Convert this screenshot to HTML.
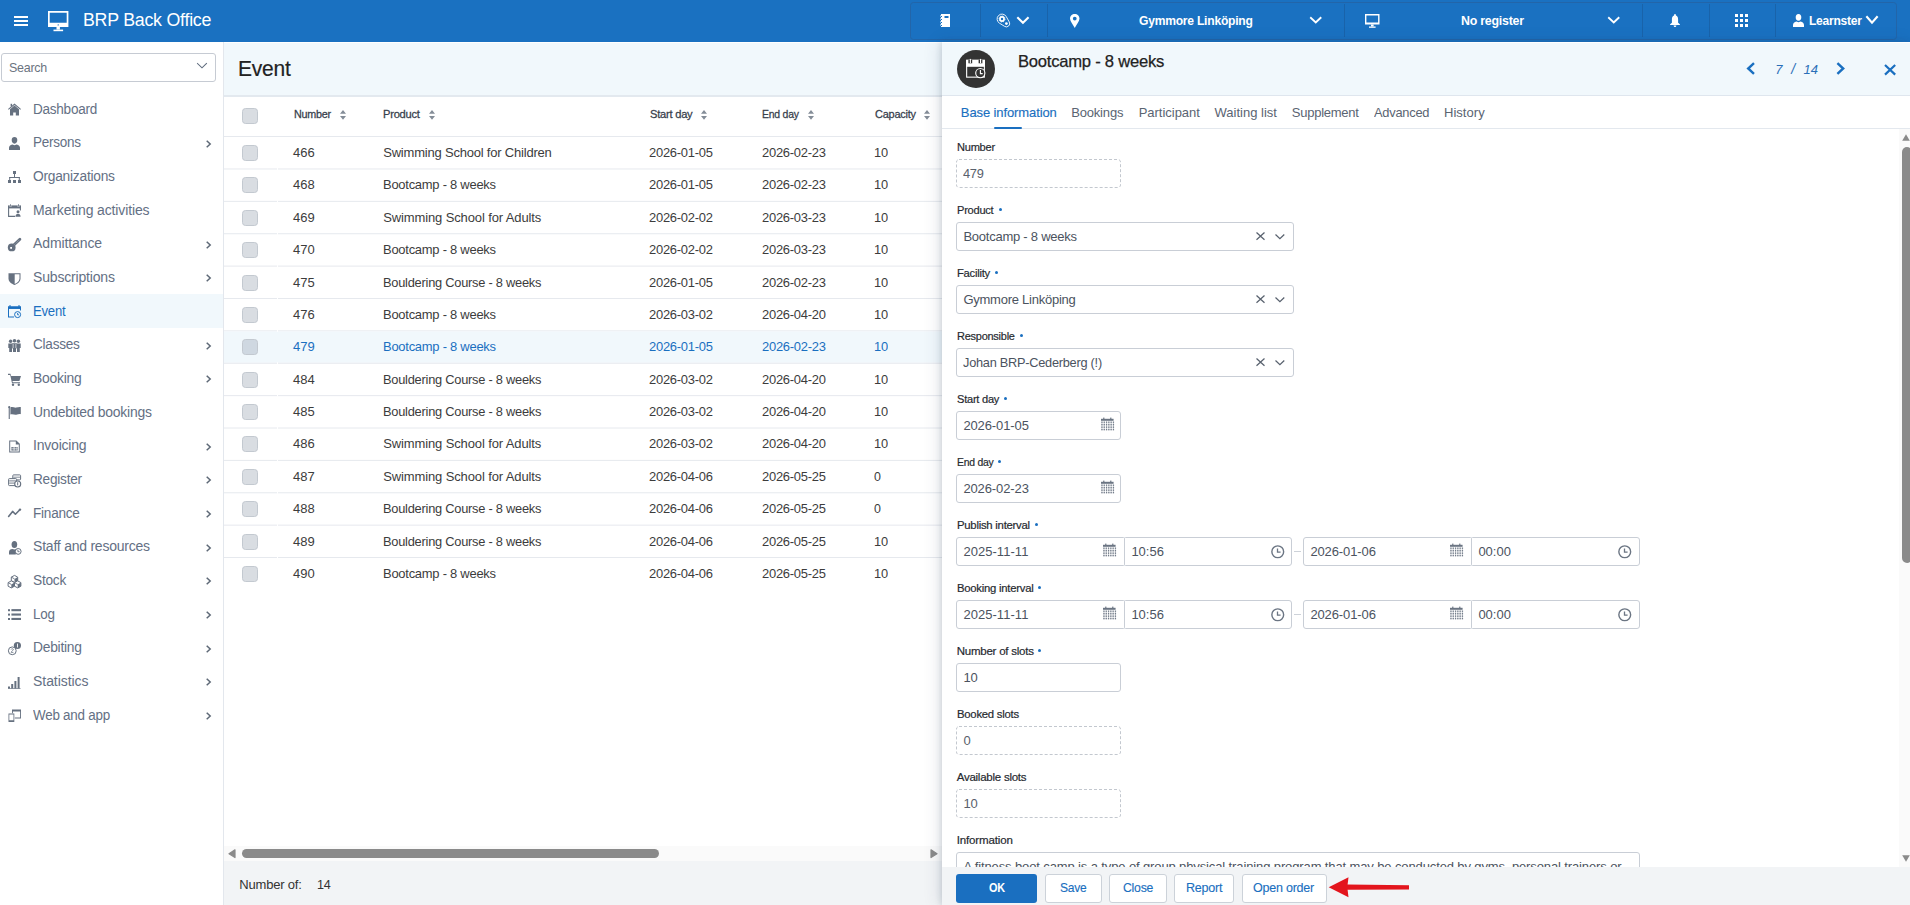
<!DOCTYPE html><html><head><meta charset="utf-8"><title>BRP Back Office</title><style>
html,body{margin:0;padding:0;}
body{width:1910px;height:905px;overflow:hidden;position:relative;background:#fff;font-family:"Liberation Sans",sans-serif;}
.t{position:absolute;white-space:nowrap;}
.b{position:absolute;box-sizing:border-box;}
svg.b{overflow:visible;}
</style></head><body>
<div class="b" style="left:0.00px;top:0.00px;width:1910.00px;height:42.00px;background:#1a71c1;"></div>
<div class="b" style="left:14.00px;top:15.90px;width:14.00px;height:1.80px;background:#fff;"></div>
<div class="b" style="left:14.00px;top:20.15px;width:14.00px;height:1.80px;background:#fff;"></div>
<div class="b" style="left:14.00px;top:24.40px;width:14.00px;height:1.80px;background:#fff;"></div>
<svg class="b" style="left:47.70px;top:10.90px;" width="21" height="21" viewBox="0 0 21 21"><path d="M0 0H20.4V16.1H0Z M1.7 1.8V11.8H18.7V1.8Z" fill="#fff" fill-rule="evenodd"/><circle cx="10.2" cy="13.9" r="0.7" fill="#1a71c1"/><rect x="8.5" y="16" width="3.4" height="2.6" fill="#fff"/><rect x="5.5" y="18.6" width="9.6" height="1.6" fill="#fff"/></svg>
<div class="t" style="left:82.60px;top:10.76px;font-size:18px;line-height:18px;color:#fff;font-weight:normal;letter-spacing:-0.250px;font-style:normal;transform:scaleX(0.9883);transform-origin:0 0;">BRP Back Office</div>
<div class="b" style="left:910.00px;top:2.00px;width:987.00px;height:38.00px;border:1px solid #2265a9;border-radius:3.5px;"></div>
<div class="b" style="left:980.00px;top:4.00px;width:1.00px;height:33.00px;background:#1963aa;"></div>
<div class="b" style="left:1047.00px;top:4.00px;width:1.00px;height:33.00px;background:#1963aa;"></div>
<div class="b" style="left:1344.00px;top:4.00px;width:1.00px;height:33.00px;background:#1963aa;"></div>
<div class="b" style="left:1642.00px;top:4.00px;width:1.00px;height:33.00px;background:#1963aa;"></div>
<div class="b" style="left:1709.00px;top:4.00px;width:1.00px;height:33.00px;background:#1963aa;"></div>
<div class="b" style="left:1775.00px;top:4.00px;width:1.00px;height:33.00px;background:#1963aa;"></div>
<svg class="b" style="left:940.00px;top:14.00px;" width="10" height="13" viewBox="0 0 10 13"><path d="M1 0H10V13H1Z" fill="#fff"/><rect x="4.5" y="2" width="4" height="2" fill="#1a71c1"/><g fill="#1a71c1"><rect x="1" y="2" width="1" height="1"/><rect x="1" y="5" width="1" height="1"/><rect x="1" y="8" width="1" height="1"/><rect x="1" y="11" width="1" height="1"/></g><g fill="#fff"><rect x="0" y="1.5" width="1" height="1"/><rect x="0" y="4.5" width="1" height="1"/><rect x="0" y="7.5" width="1" height="1"/><rect x="0" y="10.5" width="1" height="1"/></g></svg>
<svg class="b" style="left:992.00px;top:10.00px;" width="22" height="22" viewBox="0 0 22 22"><path d="M14.28 6.61 A4.9 4.9 0 1 0 7.42 13.16 L12.66 16.4 A3.3 3.3 0 0 0 17.28 11.99 Z" fill="none" stroke="#fff" stroke-width="0.9"/><circle cx="10" cy="9" r="2.05" fill="none" stroke="#fff" stroke-width="1.7"/><circle cx="10" cy="9" r="3.05" fill="none" stroke="#fff" stroke-width="0.8" stroke-dasharray="1.2 1.2"/><circle cx="14.4" cy="13.6" r="1.4" fill="#fff"/></svg>
<svg class="b" style="left:1017.20px;top:16.70px;" width="11.9" height="7.2" viewBox="0 0 11.9 7.2"><path d="M1.05 1.05 L5.95 5.8500000000000005 L10.85 1.05" fill="none" stroke="#fff" stroke-width="2.1" stroke-linecap="square"/></svg>
<svg class="b" style="left:1070.00px;top:14.00px;" width="9.5" height="14" viewBox="0 0 9.5 14"><path d="M4.75 0 C7.4 0 9.5 2 9.5 4.6 C9.5 7.4 6.4 10.6 4.75 14 C3.1 10.6 0 7.4 0 4.6 C0 2 2.1 0 4.75 0Z M4.75 2.7 A1.9 1.9 0 1 0 4.75 6.5 A1.9 1.9 0 1 0 4.75 2.7Z" fill="#fff" fill-rule="evenodd"/></svg>
<div class="t" style="left:1138.50px;top:14.10px;font-size:13px;line-height:13px;color:#fff;font-weight:bold;letter-spacing:-0.250px;font-style:normal;transform:scaleX(0.9302);transform-origin:0 0;">Gymmore Linköping</div>
<svg class="b" style="left:1310.00px;top:17.00px;" width="11.5" height="6.8" viewBox="0 0 11.5 6.8"><path d="M0.95 0.95 L5.75 5.55 L10.55 0.95" fill="none" stroke="#fff" stroke-width="1.9" stroke-linecap="square"/></svg>
<svg class="b" style="left:1365.00px;top:14.00px;" width="15" height="14" viewBox="0 0 15 14"><path d="M0 0H14.5V10.5H0Z M1.4 1.4V8.4H13.1V1.4Z" fill="#fff" fill-rule="evenodd"/><rect x="6" y="10.5" width="2.6" height="2" fill="#fff"/><rect x="4" y="12.5" width="6.6" height="1.3" fill="#fff"/></svg>
<div class="t" style="left:1461.00px;top:14.10px;font-size:13px;line-height:13px;color:#fff;font-weight:bold;letter-spacing:-0.250px;font-style:normal;transform:scaleX(0.9523);transform-origin:0 0;">No register</div>
<svg class="b" style="left:1608.00px;top:17.00px;" width="11.5" height="6.8" viewBox="0 0 11.5 6.8"><path d="M0.95 0.95 L5.75 5.55 L10.55 0.95" fill="none" stroke="#fff" stroke-width="1.9" stroke-linecap="square"/></svg>
<svg class="b" style="left:1670.30px;top:13.80px;" width="10" height="13.2" viewBox="0 0 10 13.2"><path d="M5 0 C5.6 0 5.9 0.4 5.9 1 V1.6 C7.6 2.2 8.1 3.6 8.1 5.6 V8.8 L9.9 10.3 V11 H0.1 V10.3 L1.9 8.8 V5.6 C1.9 3.6 2.4 2.2 4.1 1.6 V1 C4.1 0.4 4.4 0 5 0Z M3.6 11.6 H6.4 C6.4 12.5 5.8 13.1 5 13.1 C4.2 13.1 3.6 12.5 3.6 11.6Z" fill="#fff"/></svg>
<svg class="b" style="left:1735.00px;top:14.00px;" width="13" height="13" viewBox="0 0 13 13"><rect x="0" y="0" width="3" height="3" fill="#fff"/><rect x="5" y="0" width="3" height="3" fill="#fff"/><rect x="10" y="0" width="3" height="3" fill="#fff"/><rect x="0" y="5" width="3" height="3" fill="#fff"/><rect x="5" y="5" width="3" height="3" fill="#fff"/><rect x="10" y="5" width="3" height="3" fill="#fff"/><rect x="0" y="10" width="3" height="3" fill="#fff"/><rect x="5" y="10" width="3" height="3" fill="#fff"/><rect x="10" y="10" width="3" height="3" fill="#fff"/></svg>
<svg class="b" style="left:1793.00px;top:14.00px;" width="11" height="13" viewBox="0 0 11 13"><path d="M5.5 0 C7.4 0 8.3 1.4 8.3 3.2 C8.3 5.2 7.4 6.8 5.5 6.8 C3.6 6.8 2.7 5.2 2.7 3.2 C2.7 1.4 3.6 0 5.5 0Z M3.4 7.6 L5.5 8.3 L7.6 7.6 C9.6 8 11 9.2 11 11 V13 H0 V11 C0 9.2 1.4 8 3.4 7.6Z" fill="#fff"/></svg>
<div class="t" style="left:1809.00px;top:14.10px;font-size:13px;line-height:13px;color:#fff;font-weight:bold;letter-spacing:-0.250px;font-style:normal;transform:scaleX(0.9248);transform-origin:0 0;">Learnster</div>
<svg class="b" style="left:1866.00px;top:16.00px;" width="12" height="8" viewBox="0 0 12 8"><path d="M1.05 1.05 L6.0 6.65 L10.95 1.05" fill="none" stroke="#fff" stroke-width="2.1" stroke-linecap="square"/></svg>
<div class="b" style="left:223.00px;top:42.00px;width:1.00px;height:863.00px;background:#e3e7ed;"></div>
<div class="b" style="left:1.00px;top:53.30px;width:215.00px;height:28.60px;border:1px solid #c6cbd3;border-radius:3px;background:#fff;"></div>
<div class="t" style="left:9.40px;top:60.70px;font-size:13px;line-height:13px;color:#6b7480;font-weight:normal;letter-spacing:-0.250px;font-style:normal;transform:scaleX(0.9579);transform-origin:0 0;">Search</div>
<svg class="b" style="left:197.20px;top:63.40px;" width="10" height="5.6" viewBox="0 0 10 5.6"><path d="M0.525 0.525 L5.0 4.7749999999999995 L9.475 0.525" fill="none" stroke="#5d6a7c" stroke-width="1.05" stroke-linecap="square"/></svg>
<svg class="b" style="left:8.00px;top:103.30px;" width="13" height="13" viewBox="0 0 13 13"><path d="M6.5 0.6 L13 6 L12.3 6.8 L6.5 2 L0.7 6.8 L0 6 Z" fill="#667180"/><path d="M2 6.2 L6.5 2.6 L11 6.2 V12.4 H7.8 V9.4 H5.2 V12.4 H2Z" fill="#667180"/><rect x="2.6" y="0.8" width="1.5" height="2.6" fill="#667180"/></svg>
<div class="t" style="left:33.10px;top:101.75px;font-size:14px;line-height:14px;color:#647084;font-weight:normal;letter-spacing:-0.250px;font-style:normal;transform:scaleX(0.9659);transform-origin:0 0;">Dashboard</div>
<svg class="b" style="left:8.00px;top:136.97px;" width="13" height="13" viewBox="0 0 13 13"><path d="M6.5 0 C8.3 0 9.3 1.3 9.3 3.1 C9.3 5.1 8.3 6.7 6.5 6.7 C4.7 6.7 3.7 5.1 3.7 3.1 C3.7 1.3 4.7 0 6.5 0Z M4.3 7.4 L6.5 8.2 L8.7 7.4 C10.8 7.8 12 9 12 10.8 V13 H1 V10.8 C1 9 2.2 7.8 4.3 7.4Z" fill="#667180"/></svg>
<div class="t" style="left:33.10px;top:135.42px;font-size:14px;line-height:14px;color:#647084;font-weight:normal;letter-spacing:-0.250px;font-style:normal;transform:scaleX(0.9638);transform-origin:0 0;">Persons</div>
<svg class="b" style="left:205.60px;top:139.67px;" width="5" height="8" viewBox="0 0 5 8"><path d="M0.7 0.7 L4.2 4 L0.7 7.3" fill="none" stroke="#5d6876" stroke-width="1.5"/></svg>
<svg class="b" style="left:8.00px;top:170.63px;" width="13" height="13" viewBox="0 0 13 13"><rect x="5" y="0" width="3" height="3" fill="#667180"/><rect x="6" y="3" width="1" height="4" fill="#667180"/><rect x="1.2" y="6" width="10.6" height="1" fill="#667180"/><rect x="1.2" y="6" width="1" height="3" fill="#667180"/><rect x="10.8" y="6" width="1" height="3" fill="#667180"/><rect x="0" y="9" width="3" height="3" fill="#667180"/><rect x="5" y="9" width="3" height="3" fill="#667180"/><rect x="10" y="9" width="3" height="3" fill="#667180"/></svg>
<div class="t" style="left:33.10px;top:169.08px;font-size:14px;line-height:14px;color:#647084;font-weight:normal;letter-spacing:-0.250px;font-style:normal;transform:scaleX(0.9831);transform-origin:0 0;">Organizations</div>
<svg class="b" style="left:8.00px;top:204.30px;" width="13" height="13" viewBox="0 0 13 13"><path d="M0.6 2 V12.4 H7" fill="none" stroke="#667180" stroke-width="1.1"/><rect x="0" y="1.4" width="13" height="3" fill="#667180"/><rect x="1.6" y="1.4" width="1.8" height="1.3" fill="#fff"/><rect x="9.6" y="1.4" width="1.8" height="1.3" fill="#fff"/><rect x="2.1" y="0.2" width="0.8" height="2.4" fill="#667180"/><rect x="10.1" y="0.2" width="0.8" height="2.4" fill="#667180"/><path d="M12.4 4 V6.5" stroke="#667180" stroke-width="1.1"/><circle cx="10" cy="7.8" r="1.5" fill="#667180"/><path d="M7.4 12.8 C7.4 10.6 8.6 9.7 10 9.7 C11.4 9.7 12.6 10.6 12.6 12.8Z" fill="#667180"/></svg>
<div class="t" style="left:33.10px;top:202.75px;font-size:14px;line-height:14px;color:#647084;font-weight:normal;letter-spacing:-0.137px;font-style:normal;">Marketing activities</div>
<svg class="b" style="left:8.00px;top:237.97px;" width="13" height="13" viewBox="0 0 13 13"><circle cx="3.7" cy="9.4" r="3.9" fill="#667180"/><rect x="2.2" y="9" width="1.8" height="1.8" fill="#fff"/><path d="M5.6 7.3 L11.9 1.2" stroke="#667180" stroke-width="2.8" stroke-linecap="round"/><path d="M6.6 6.5 L11.4 1.8" stroke="#fff" stroke-width="0.7" stroke-dasharray="0.9 0.9" opacity="0.6"/></svg>
<div class="t" style="left:33.10px;top:236.42px;font-size:14px;line-height:14px;color:#647084;font-weight:normal;letter-spacing:-0.111px;font-style:normal;">Admittance</div>
<svg class="b" style="left:205.60px;top:240.67px;" width="5" height="8" viewBox="0 0 5 8"><path d="M0.7 0.7 L4.2 4 L0.7 7.3" fill="none" stroke="#5d6876" stroke-width="1.5"/></svg>
<svg class="b" style="left:8.00px;top:271.63px;" width="13" height="13" viewBox="0 0 13 13"><path d="M0.5 1.2 H12.5 V6.5 C12.5 9.6 9.8 11.6 6.5 13 C3.2 11.6 0.5 9.6 0.5 6.5Z" fill="#667180"/><path d="M6.7 2.2 H11.5 V6.5 C11.5 9 9.4 10.8 6.7 11.9Z" fill="#fff"/></svg>
<div class="t" style="left:33.10px;top:270.08px;font-size:14px;line-height:14px;color:#647084;font-weight:normal;letter-spacing:-0.183px;font-style:normal;">Subscriptions</div>
<svg class="b" style="left:205.60px;top:274.34px;" width="5" height="8" viewBox="0 0 5 8"><path d="M0.7 0.7 L4.2 4 L0.7 7.3" fill="none" stroke="#5d6876" stroke-width="1.5"/></svg>
<div class="b" style="left:0.00px;top:293.90px;width:223.00px;height:33.97px;background:#f1f8fc;"></div>
<svg class="b" style="left:8.00px;top:305.30px;" width="13" height="13" viewBox="0 0 13 13"><path d="M0 1.5 H13 V5.5 H12 V3.8 H1 V11.5 H6 V12.5 H0Z" fill="#1a6fc0"/><rect x="0" y="1.5" width="13" height="2.3" fill="#1a6fc0"/><rect x="1.5" y="0" width="1" height="2.5" fill="#1a6fc0"/><rect x="10.5" y="0" width="1" height="2.5" fill="#1a6fc0"/><circle cx="9.6" cy="9.6" r="3" fill="none" stroke="#1a6fc0" stroke-width="1"/><path d="M9.6 8 V9.8 H11" fill="none" stroke="#1a6fc0" stroke-width="0.9"/></svg>
<div class="t" style="left:33.10px;top:303.75px;font-size:14px;line-height:14px;color:#1a6fc0;font-weight:normal;letter-spacing:-0.250px;font-style:normal;transform:scaleX(0.9376);transform-origin:0 0;">Event</div>
<svg class="b" style="left:8.00px;top:338.97px;" width="13" height="13" viewBox="0 0 13 13"><circle cx="2.6" cy="2.2" r="1.7" fill="#667180"/><circle cx="6.5" cy="1.8" r="1.8" fill="#667180"/><circle cx="10.4" cy="2.2" r="1.7" fill="#667180"/><path d="M0.3 4.6 H4.8 V9 H4 V13 H1.2 V9 H0.3Z" fill="#667180"/><path d="M4.3 4.2 H8.7 V9.4 H8 V13 H5 V9.4 H4.3Z" fill="#667180"/><path d="M8.2 4.6 H12.7 V9 H11.8 V13 H9 V9 H8.2Z" fill="#667180"/><rect x="4.8" y="5" width="0.6" height="4" fill="#fff"/><rect x="7.6" y="5" width="0.6" height="4" fill="#fff"/></svg>
<div class="t" style="left:33.10px;top:337.42px;font-size:14px;line-height:14px;color:#647084;font-weight:normal;letter-spacing:-0.250px;font-style:normal;transform:scaleX(0.9695);transform-origin:0 0;">Classes</div>
<svg class="b" style="left:205.60px;top:341.67px;" width="5" height="8" viewBox="0 0 5 8"><path d="M0.7 0.7 L4.2 4 L0.7 7.3" fill="none" stroke="#5d6876" stroke-width="1.5"/></svg>
<svg class="b" style="left:8.00px;top:372.64px;" width="13" height="13" viewBox="0 0 13 13"><path d="M0 0.8 H2.4 L3.2 3 H13 L11.4 8 H4.4 L4.8 9.2 H12 V10.3 H4 L2.2 2 H0Z" fill="#667180"/><circle cx="5" cy="11.8" r="1.2" fill="#667180"/><circle cx="10.8" cy="11.8" r="1.2" fill="#667180"/></svg>
<div class="t" style="left:33.10px;top:371.08px;font-size:14px;line-height:14px;color:#647084;font-weight:normal;letter-spacing:-0.250px;font-style:normal;transform:scaleX(0.9932);transform-origin:0 0;">Booking</div>
<svg class="b" style="left:205.60px;top:375.34px;" width="5" height="8" viewBox="0 0 5 8"><path d="M0.7 0.7 L4.2 4 L0.7 7.3" fill="none" stroke="#5d6876" stroke-width="1.5"/></svg>
<svg class="b" style="left:8.00px;top:406.30px;" width="13" height="13" viewBox="0 0 13 13"><rect x="0.7" y="1.2" width="1.1" height="11.8" fill="#667180"/><circle cx="1.25" cy="1.2" r="1.1" fill="#667180"/><path d="M2.4 1.4 C4.6 0.4 6.4 2 8.2 1.6 C10 1.2 11.2 0.8 12.8 1.1 V8.2 C11.2 7.9 10 8.4 8.2 8.8 C6.4 9.2 4.6 7.6 2.4 8.6Z" fill="#667180"/></svg>
<div class="t" style="left:33.10px;top:404.75px;font-size:14px;line-height:14px;color:#647084;font-weight:normal;letter-spacing:-0.250px;font-style:normal;transform:scaleX(0.9945);transform-origin:0 0;">Undebited bookings</div>
<svg class="b" style="left:8.00px;top:439.97px;" width="13" height="13" viewBox="0 0 13 13"><path d="M1.2 0.4 H8.4 L11.8 3.8 V12.6 H1.2Z M2.2 1.4 V11.6 H10.8 V4.4 H7.8 V1.4Z" fill="#667180" fill-rule="evenodd"/><rect x="3.4" y="7" width="6.2" height="3.6" fill="#667180"/><g fill="#fff"><rect x="4.9" y="7" width="0.5" height="3.6"/><rect x="6.4" y="7" width="0.5" height="3.6"/><rect x="7.9" y="7" width="0.5" height="3.6"/><rect x="3.4" y="8.6" width="6.2" height="0.5"/></g></svg>
<div class="t" style="left:33.10px;top:438.42px;font-size:14px;line-height:14px;color:#647084;font-weight:normal;letter-spacing:-0.218px;font-style:normal;">Invoicing</div>
<svg class="b" style="left:205.60px;top:442.67px;" width="5" height="8" viewBox="0 0 5 8"><path d="M0.7 0.7 L4.2 4 L0.7 7.3" fill="none" stroke="#5d6876" stroke-width="1.5"/></svg>
<svg class="b" style="left:8.00px;top:473.64px;" width="13" height="13" viewBox="0 0 13 13"><rect x="4.8" y="0.9" width="7.8" height="5" rx="0.8" fill="#fff" stroke="#667180" stroke-width="1"/><path d="M5.4 3.2 H12" stroke="#667180" stroke-width="0.8"/><rect x="0.6" y="4.6" width="8" height="7" rx="0.8" fill="#fff" stroke="#667180" stroke-width="1"/><path d="M1.2 6.9 H8 M1.2 9.1 H8" stroke="#667180" stroke-width="0.9"/><circle cx="9.7" cy="10" r="3" fill="#fff" stroke="#667180" stroke-width="1.1"/><path d="M9.7 8.2 V11.4" stroke="#667180" stroke-width="1"/></svg>
<div class="t" style="left:33.10px;top:472.09px;font-size:14px;line-height:14px;color:#647084;font-weight:normal;letter-spacing:-0.250px;font-style:normal;transform:scaleX(0.9739);transform-origin:0 0;">Register</div>
<svg class="b" style="left:205.60px;top:476.34px;" width="5" height="8" viewBox="0 0 5 8"><path d="M0.7 0.7 L4.2 4 L0.7 7.3" fill="none" stroke="#5d6876" stroke-width="1.5"/></svg>
<svg class="b" style="left:8.00px;top:507.30px;" width="13" height="13" viewBox="0 0 13 13"><path d="M0.6 9.4 L4.6 4.4 L7.4 7.2 L11.6 3" fill="none" stroke="#667180" stroke-width="1.6" stroke-linejoin="round" stroke-linecap="round"/><circle cx="12" cy="2.6" r="1.2" fill="#667180"/></svg>
<div class="t" style="left:33.10px;top:505.75px;font-size:14px;line-height:14px;color:#647084;font-weight:normal;letter-spacing:-0.250px;font-style:normal;transform:scaleX(0.9716);transform-origin:0 0;">Finance</div>
<svg class="b" style="left:205.60px;top:510.00px;" width="5" height="8" viewBox="0 0 5 8"><path d="M0.7 0.7 L4.2 4 L0.7 7.3" fill="none" stroke="#5d6876" stroke-width="1.5"/></svg>
<svg class="b" style="left:8.00px;top:540.97px;" width="13" height="13" viewBox="0 0 13 13"><ellipse cx="6.4" cy="3.6" rx="2.8" ry="3.5" fill="#667180"/><path d="M1 13.5 V11 C1 9 2.6 8 4.3 7.9 L6.4 8.6 L8.5 7.9 C9.4 8 10 8.3 10.6 8.8 L7.6 13.5Z" fill="#667180"/><circle cx="10.2" cy="10.4" r="2.9" fill="#fff" stroke="#667180" stroke-width="1"/><path d="M9.9 8.8 V10.7 H11.6" fill="none" stroke="#667180" stroke-width="0.9"/></svg>
<div class="t" style="left:33.10px;top:539.42px;font-size:14px;line-height:14px;color:#647084;font-weight:normal;letter-spacing:-0.233px;font-style:normal;">Staff and resources</div>
<svg class="b" style="left:205.60px;top:543.67px;" width="5" height="8" viewBox="0 0 5 8"><path d="M0.7 0.7 L4.2 4 L0.7 7.3" fill="none" stroke="#5d6876" stroke-width="1.5"/></svg>
<svg class="b" style="left:8.00px;top:574.64px;" width="13" height="13" viewBox="0 0 13 13"><path d="M6.5 0.3999999999999999 L9.7 2.0999999999999996 V5.7 L6.5 7.4 L3.3 5.7 V2.0999999999999996Z" fill="#fff" stroke="#667180" stroke-width="1" stroke-linejoin="round"/><path d="M6.5 3.9 L9.7 2.0999999999999996 V5.7 L6.5 7.4Z" fill="#667180"/><path d="M3.3 2.0999999999999996 L6.5 3.9" stroke="#667180" stroke-width="0.9"/><path d="M3.3 5.9 L6.5 7.6000000000000005 V11.200000000000001 L3.3 12.9 L0.09999999999999964 11.200000000000001 V7.6000000000000005Z" fill="#fff" stroke="#667180" stroke-width="1" stroke-linejoin="round"/><path d="M3.3 9.4 L6.5 7.6000000000000005 V11.200000000000001 L3.3 12.9Z" fill="#667180"/><path d="M0.09999999999999964 7.6000000000000005 L3.3 9.4" stroke="#667180" stroke-width="0.9"/><path d="M9.7 5.9 L12.899999999999999 7.6000000000000005 V11.200000000000001 L9.7 12.9 L6.499999999999999 11.200000000000001 V7.6000000000000005Z" fill="#fff" stroke="#667180" stroke-width="1" stroke-linejoin="round"/><path d="M9.7 9.4 L12.899999999999999 7.6000000000000005 V11.200000000000001 L9.7 12.9Z" fill="#667180"/><path d="M6.499999999999999 7.6000000000000005 L9.7 9.4" stroke="#667180" stroke-width="0.9"/></svg>
<div class="t" style="left:33.10px;top:573.09px;font-size:14px;line-height:14px;color:#647084;font-weight:normal;letter-spacing:-0.250px;font-style:normal;transform:scaleX(0.9790);transform-origin:0 0;">Stock</div>
<svg class="b" style="left:205.60px;top:577.34px;" width="5" height="8" viewBox="0 0 5 8"><path d="M0.7 0.7 L4.2 4 L0.7 7.3" fill="none" stroke="#5d6876" stroke-width="1.5"/></svg>
<svg class="b" style="left:8.00px;top:608.30px;" width="13" height="13" viewBox="0 0 13 13"><g fill="#667180"><rect x="0" y="1.2" width="2" height="2"/><rect x="0" y="5.6" width="2" height="2"/><rect x="0" y="10" width="2" height="2"/><rect x="3.4" y="1.1" width="9.6" height="2.1"/><rect x="3.4" y="5.5" width="9.6" height="2.1"/><rect x="3.4" y="9.9" width="9.6" height="2.1"/></g></svg>
<div class="t" style="left:33.10px;top:606.75px;font-size:14px;line-height:14px;color:#647084;font-weight:normal;letter-spacing:-0.250px;font-style:normal;transform:scaleX(0.9604);transform-origin:0 0;">Log</div>
<svg class="b" style="left:205.60px;top:611.00px;" width="5" height="8" viewBox="0 0 5 8"><path d="M0.7 0.7 L4.2 4 L0.7 7.3" fill="none" stroke="#5d6876" stroke-width="1.5"/></svg>
<svg class="b" style="left:8.00px;top:641.97px;" width="13" height="13" viewBox="0 0 13 13"><circle cx="9.4" cy="3.5" r="3.6" fill="#667180"/><rect x="9" y="1.6" width="0.9" height="3.9" fill="#fff"/><circle cx="4.3" cy="8.8" r="3.9" fill="#fff" stroke="#667180" stroke-width="1"/><path d="M3.2 7.4 C3.2 6.6 5.4 6.6 5.4 7.4 C5.4 8.2 3.2 9.4 3.2 10.4 H5.4" fill="none" stroke="#667180" stroke-width="0.8"/></svg>
<div class="t" style="left:33.10px;top:640.42px;font-size:14px;line-height:14px;color:#647084;font-weight:normal;letter-spacing:-0.250px;font-style:normal;transform:scaleX(0.9868);transform-origin:0 0;">Debiting</div>
<svg class="b" style="left:205.60px;top:644.67px;" width="5" height="8" viewBox="0 0 5 8"><path d="M0.7 0.7 L4.2 4 L0.7 7.3" fill="none" stroke="#5d6876" stroke-width="1.5"/></svg>
<svg class="b" style="left:8.00px;top:675.64px;" width="13" height="13" viewBox="0 0 13 13"><g fill="#667180"><rect x="0" y="10.5" width="2" height="2"/><rect x="3.2" y="8" width="2" height="4.5"/><rect x="6.4" y="5" width="2" height="7.5"/><rect x="9.6" y="1" width="2" height="11.5"/><rect x="0" y="12.3" width="12.5" height="0.7"/></g></svg>
<div class="t" style="left:33.10px;top:674.09px;font-size:14px;line-height:14px;color:#647084;font-weight:normal;letter-spacing:-0.078px;font-style:normal;">Statistics</div>
<svg class="b" style="left:205.60px;top:678.34px;" width="5" height="8" viewBox="0 0 5 8"><path d="M0.7 0.7 L4.2 4 L0.7 7.3" fill="none" stroke="#5d6876" stroke-width="1.5"/></svg>
<svg class="b" style="left:8.00px;top:709.31px;" width="13" height="13" viewBox="0 0 13 13"><path d="M4 0.5 H13 V9.5 H6.8 V8.6 H12.1 V2.4 H4.9 V4.2 H4Z" fill="#667180"/><rect x="4.6" y="1.3" width="0.6" height="0.6" fill="#667180"/><path d="M0.5 4.6 H6.3 V13 H0.5Z M1.3 5.4 V11.2 H5.5 V5.4Z" fill="#667180" fill-rule="evenodd"/></svg>
<div class="t" style="left:33.10px;top:707.76px;font-size:14px;line-height:14px;color:#647084;font-weight:normal;letter-spacing:-0.250px;font-style:normal;transform:scaleX(0.9575);transform-origin:0 0;">Web and app</div>
<svg class="b" style="left:205.60px;top:712.01px;" width="5" height="8" viewBox="0 0 5 8"><path d="M0.7 0.7 L4.2 4 L0.7 7.3" fill="none" stroke="#5d6876" stroke-width="1.5"/></svg>
<div class="b" style="left:224.00px;top:43.00px;width:720.00px;height:52.00px;background:#f1f8fc;"></div>
<div class="b" style="left:224.00px;top:95.00px;width:720.00px;height:1.60px;background:#e3e9ef;"></div>
<div class="t" style="left:237.79px;top:58.35px;font-size:22.5px;line-height:22.5px;color:#222;font-weight:normal;letter-spacing:-0.250px;font-style:normal;-webkit-text-stroke:0.2px #222;transform:scaleX(0.9324);transform-origin:0 0;">Event</div>
<div class="b" style="left:242.20px;top:108.20px;width:16.00px;height:16.00px;background:#d9dde2;border:1px solid #c3c9d0;border-radius:3.5px;"></div>
<div class="t" style="left:293.66px;top:108.81px;font-size:11.8px;line-height:11.8px;color:#37404c;font-weight:normal;letter-spacing:-0.250px;font-style:normal;-webkit-text-stroke:0.28px #37404c;transform:scaleX(0.9118);transform-origin:0 0;">Number</div>
<svg class="b" style="left:339.90px;top:109.60px;" width="6" height="10" viewBox="0 0 6 10"><path d="M3 0 L6 3.8 H0Z M0 6 H6 L3 9.8Z" fill="#848d98"/></svg>
<div class="t" style="left:383.46px;top:108.81px;font-size:11.8px;line-height:11.8px;color:#37404c;font-weight:normal;letter-spacing:-0.250px;font-style:normal;-webkit-text-stroke:0.28px #37404c;transform:scaleX(0.9420);transform-origin:0 0;">Product</div>
<svg class="b" style="left:428.90px;top:109.60px;" width="6" height="10" viewBox="0 0 6 10"><path d="M3 0 L6 3.8 H0Z M0 6 H6 L3 9.8Z" fill="#848d98"/></svg>
<div class="t" style="left:649.66px;top:108.81px;font-size:11.8px;line-height:11.8px;color:#37404c;font-weight:normal;letter-spacing:-0.250px;font-style:normal;-webkit-text-stroke:0.28px #37404c;transform:scaleX(0.9441);transform-origin:0 0;">Start day</div>
<svg class="b" style="left:701.00px;top:109.60px;" width="6" height="10" viewBox="0 0 6 10"><path d="M3 0 L6 3.8 H0Z M0 6 H6 L3 9.8Z" fill="#848d98"/></svg>
<div class="t" style="left:762.45px;top:108.81px;font-size:11.8px;line-height:11.8px;color:#37404c;font-weight:normal;letter-spacing:-0.250px;font-style:normal;-webkit-text-stroke:0.28px #37404c;transform:scaleX(0.8847);transform-origin:0 0;">End day</div>
<svg class="b" style="left:807.70px;top:109.60px;" width="6" height="10" viewBox="0 0 6 10"><path d="M3 0 L6 3.8 H0Z M0 6 H6 L3 9.8Z" fill="#848d98"/></svg>
<div class="t" style="left:874.76px;top:108.81px;font-size:11.8px;line-height:11.8px;color:#37404c;font-weight:normal;letter-spacing:-0.250px;font-style:normal;-webkit-text-stroke:0.28px #37404c;transform:scaleX(0.9280);transform-origin:0 0;">Capacity</div>
<svg class="b" style="left:923.50px;top:109.60px;" width="6" height="10" viewBox="0 0 6 10"><path d="M3 0 L6 3.8 H0Z M0 6 H6 L3 9.8Z" fill="#848d98"/></svg>
<div class="b" style="left:224.00px;top:136.00px;width:720.00px;height:1.00px;background:#e6e9ee;"></div>
<svg class="b" style="left:224.00px;top:136.00px;" width="720" height="460" viewBox="0 0 720 460"><rect x="0" y="32.47" width="720" height="1" fill="#e6e9ee"/><rect x="0" y="64.85" width="720" height="1" fill="#e6e9ee"/><rect x="0" y="97.23" width="720" height="1" fill="#e6e9ee"/><rect x="0" y="129.61" width="720" height="1" fill="#e6e9ee"/><rect x="0" y="161.99" width="720" height="1" fill="#e6e9ee"/><rect x="0" y="194.37" width="720" height="1" fill="#e6e9ee"/><rect x="0" y="195.37" width="720" height="31.38" fill="#f1f8fc"/><rect x="0" y="226.75" width="720" height="1" fill="#e6e9ee"/><rect x="0" y="259.13" width="720" height="1" fill="#e6e9ee"/><rect x="0" y="291.51" width="720" height="1" fill="#e6e9ee"/><rect x="0" y="323.89" width="720" height="1" fill="#e6e9ee"/><rect x="0" y="356.27" width="720" height="1" fill="#e6e9ee"/><rect x="0" y="388.65" width="720" height="1" fill="#e6e9ee"/><rect x="0" y="421.03" width="720" height="1" fill="#e6e9ee"/><rect x="53" y="31.97" width="1" height="2" fill="#fff"/><rect x="53" y="64.35" width="1" height="2" fill="#fff"/><rect x="53" y="96.73" width="1" height="2" fill="#fff"/><rect x="53" y="129.11" width="1" height="2" fill="#fff"/><rect x="53" y="161.49" width="1" height="2" fill="#fff"/><rect x="53" y="193.87" width="1" height="2" fill="#fff"/><rect x="53" y="226.25" width="1" height="2" fill="#fff"/><rect x="53" y="258.63" width="1" height="2" fill="#fff"/><rect x="53" y="291.01" width="1" height="2" fill="#fff"/><rect x="53" y="323.39" width="1" height="2" fill="#fff"/><rect x="53" y="355.77" width="1" height="2" fill="#fff"/><rect x="53" y="388.15" width="1" height="2" fill="#fff"/><rect x="53" y="420.53" width="1" height="2" fill="#fff"/></svg>
<div class="b" style="left:242.20px;top:144.94px;width:16.00px;height:16.00px;background:#d9dde2;border:1px solid #c3c9d0;border-radius:3.5px;"></div>
<div class="t" style="left:293.00px;top:145.98px;font-size:13px;line-height:13px;color:#3c3c3c;font-weight:normal;letter-spacing:0.000px;font-style:normal;">466</div>
<div class="t" style="left:383.20px;top:145.98px;font-size:13px;line-height:13px;color:#3c3c3c;font-weight:normal;letter-spacing:-0.203px;font-style:normal;">Swimming School for Children</div>
<div class="t" style="left:649.30px;top:145.98px;font-size:13px;line-height:13px;color:#3c3c3c;font-weight:normal;letter-spacing:-0.250px;font-style:normal;transform:scaleX(0.9958);transform-origin:0 0;">2026-01-05</div>
<div class="t" style="left:762.20px;top:145.98px;font-size:13px;line-height:13px;color:#3c3c3c;font-weight:normal;letter-spacing:-0.250px;font-style:normal;transform:scaleX(0.9958);transform-origin:0 0;">2026-02-23</div>
<div class="t" style="left:874.40px;top:145.98px;font-size:13px;line-height:13px;color:#3c3c3c;font-weight:normal;letter-spacing:-0.250px;font-style:normal;transform:scaleX(0.9879);transform-origin:0 0;">10</div>
<div class="b" style="left:242.20px;top:177.36px;width:16.00px;height:16.00px;background:#d9dde2;border:1px solid #c3c9d0;border-radius:3.5px;"></div>
<div class="t" style="left:293.00px;top:178.41px;font-size:13px;line-height:13px;color:#3c3c3c;font-weight:normal;letter-spacing:0.000px;font-style:normal;">468</div>
<div class="t" style="left:383.20px;top:178.41px;font-size:13px;line-height:13px;color:#3c3c3c;font-weight:normal;letter-spacing:-0.250px;font-style:normal;transform:scaleX(0.9959);transform-origin:0 0;">Bootcamp - 8 weeks</div>
<div class="t" style="left:649.30px;top:178.41px;font-size:13px;line-height:13px;color:#3c3c3c;font-weight:normal;letter-spacing:-0.250px;font-style:normal;transform:scaleX(0.9958);transform-origin:0 0;">2026-01-05</div>
<div class="t" style="left:762.20px;top:178.41px;font-size:13px;line-height:13px;color:#3c3c3c;font-weight:normal;letter-spacing:-0.250px;font-style:normal;transform:scaleX(0.9958);transform-origin:0 0;">2026-02-23</div>
<div class="t" style="left:874.40px;top:178.41px;font-size:13px;line-height:13px;color:#3c3c3c;font-weight:normal;letter-spacing:-0.250px;font-style:normal;transform:scaleX(0.9879);transform-origin:0 0;">10</div>
<div class="b" style="left:242.20px;top:209.74px;width:16.00px;height:16.00px;background:#d9dde2;border:1px solid #c3c9d0;border-radius:3.5px;"></div>
<div class="t" style="left:293.00px;top:210.79px;font-size:13px;line-height:13px;color:#3c3c3c;font-weight:normal;letter-spacing:0.000px;font-style:normal;">469</div>
<div class="t" style="left:383.20px;top:210.79px;font-size:13px;line-height:13px;color:#3c3c3c;font-weight:normal;letter-spacing:-0.119px;font-style:normal;">Swimming School for Adults</div>
<div class="t" style="left:649.30px;top:210.79px;font-size:13px;line-height:13px;color:#3c3c3c;font-weight:normal;letter-spacing:-0.250px;font-style:normal;transform:scaleX(0.9958);transform-origin:0 0;">2026-02-02</div>
<div class="t" style="left:762.20px;top:210.79px;font-size:13px;line-height:13px;color:#3c3c3c;font-weight:normal;letter-spacing:-0.250px;font-style:normal;transform:scaleX(0.9958);transform-origin:0 0;">2026-03-23</div>
<div class="t" style="left:874.40px;top:210.79px;font-size:13px;line-height:13px;color:#3c3c3c;font-weight:normal;letter-spacing:-0.250px;font-style:normal;transform:scaleX(0.9879);transform-origin:0 0;">10</div>
<div class="b" style="left:242.20px;top:242.12px;width:16.00px;height:16.00px;background:#d9dde2;border:1px solid #c3c9d0;border-radius:3.5px;"></div>
<div class="t" style="left:293.00px;top:243.17px;font-size:13px;line-height:13px;color:#3c3c3c;font-weight:normal;letter-spacing:0.000px;font-style:normal;">470</div>
<div class="t" style="left:383.20px;top:243.17px;font-size:13px;line-height:13px;color:#3c3c3c;font-weight:normal;letter-spacing:-0.250px;font-style:normal;transform:scaleX(0.9959);transform-origin:0 0;">Bootcamp - 8 weeks</div>
<div class="t" style="left:649.30px;top:243.17px;font-size:13px;line-height:13px;color:#3c3c3c;font-weight:normal;letter-spacing:-0.250px;font-style:normal;transform:scaleX(0.9958);transform-origin:0 0;">2026-02-02</div>
<div class="t" style="left:762.20px;top:243.17px;font-size:13px;line-height:13px;color:#3c3c3c;font-weight:normal;letter-spacing:-0.250px;font-style:normal;transform:scaleX(0.9958);transform-origin:0 0;">2026-03-23</div>
<div class="t" style="left:874.40px;top:243.17px;font-size:13px;line-height:13px;color:#3c3c3c;font-weight:normal;letter-spacing:-0.250px;font-style:normal;transform:scaleX(0.9879);transform-origin:0 0;">10</div>
<div class="b" style="left:242.20px;top:274.50px;width:16.00px;height:16.00px;background:#d9dde2;border:1px solid #c3c9d0;border-radius:3.5px;"></div>
<div class="t" style="left:293.00px;top:275.55px;font-size:13px;line-height:13px;color:#3c3c3c;font-weight:normal;letter-spacing:0.000px;font-style:normal;">475</div>
<div class="t" style="left:383.20px;top:275.55px;font-size:13px;line-height:13px;color:#3c3c3c;font-weight:normal;letter-spacing:-0.250px;font-style:normal;transform:scaleX(0.9877);transform-origin:0 0;">Bouldering Course - 8 weeks</div>
<div class="t" style="left:649.30px;top:275.55px;font-size:13px;line-height:13px;color:#3c3c3c;font-weight:normal;letter-spacing:-0.250px;font-style:normal;transform:scaleX(0.9958);transform-origin:0 0;">2026-01-05</div>
<div class="t" style="left:762.20px;top:275.55px;font-size:13px;line-height:13px;color:#3c3c3c;font-weight:normal;letter-spacing:-0.250px;font-style:normal;transform:scaleX(0.9958);transform-origin:0 0;">2026-02-23</div>
<div class="t" style="left:874.40px;top:275.55px;font-size:13px;line-height:13px;color:#3c3c3c;font-weight:normal;letter-spacing:-0.250px;font-style:normal;transform:scaleX(0.9879);transform-origin:0 0;">10</div>
<div class="b" style="left:242.20px;top:306.88px;width:16.00px;height:16.00px;background:#d9dde2;border:1px solid #c3c9d0;border-radius:3.5px;"></div>
<div class="t" style="left:293.00px;top:307.93px;font-size:13px;line-height:13px;color:#3c3c3c;font-weight:normal;letter-spacing:0.000px;font-style:normal;">476</div>
<div class="t" style="left:383.20px;top:307.93px;font-size:13px;line-height:13px;color:#3c3c3c;font-weight:normal;letter-spacing:-0.250px;font-style:normal;transform:scaleX(0.9959);transform-origin:0 0;">Bootcamp - 8 weeks</div>
<div class="t" style="left:649.30px;top:307.93px;font-size:13px;line-height:13px;color:#3c3c3c;font-weight:normal;letter-spacing:-0.250px;font-style:normal;transform:scaleX(0.9958);transform-origin:0 0;">2026-03-02</div>
<div class="t" style="left:762.20px;top:307.93px;font-size:13px;line-height:13px;color:#3c3c3c;font-weight:normal;letter-spacing:-0.250px;font-style:normal;transform:scaleX(0.9958);transform-origin:0 0;">2026-04-20</div>
<div class="t" style="left:874.40px;top:307.93px;font-size:13px;line-height:13px;color:#3c3c3c;font-weight:normal;letter-spacing:-0.250px;font-style:normal;transform:scaleX(0.9879);transform-origin:0 0;">10</div>
<div class="b" style="left:242.20px;top:339.26px;width:16.00px;height:16.00px;background:#cfd8e1;border:1px solid #c3c9d0;border-radius:3.5px;"></div>
<div class="t" style="left:293.00px;top:340.31px;font-size:13px;line-height:13px;color:#1a6fc0;font-weight:normal;letter-spacing:0.000px;font-style:normal;">479</div>
<div class="t" style="left:383.20px;top:340.31px;font-size:13px;line-height:13px;color:#1a6fc0;font-weight:normal;letter-spacing:-0.250px;font-style:normal;transform:scaleX(0.9959);transform-origin:0 0;">Bootcamp - 8 weeks</div>
<div class="t" style="left:649.30px;top:340.31px;font-size:13px;line-height:13px;color:#1a6fc0;font-weight:normal;letter-spacing:-0.250px;font-style:normal;transform:scaleX(0.9958);transform-origin:0 0;">2026-01-05</div>
<div class="t" style="left:762.20px;top:340.31px;font-size:13px;line-height:13px;color:#1a6fc0;font-weight:normal;letter-spacing:-0.250px;font-style:normal;transform:scaleX(0.9958);transform-origin:0 0;">2026-02-23</div>
<div class="t" style="left:874.40px;top:340.31px;font-size:13px;line-height:13px;color:#1a6fc0;font-weight:normal;letter-spacing:-0.250px;font-style:normal;transform:scaleX(0.9879);transform-origin:0 0;">10</div>
<div class="b" style="left:242.20px;top:371.64px;width:16.00px;height:16.00px;background:#d9dde2;border:1px solid #c3c9d0;border-radius:3.5px;"></div>
<div class="t" style="left:293.00px;top:372.69px;font-size:13px;line-height:13px;color:#3c3c3c;font-weight:normal;letter-spacing:0.000px;font-style:normal;">484</div>
<div class="t" style="left:383.20px;top:372.69px;font-size:13px;line-height:13px;color:#3c3c3c;font-weight:normal;letter-spacing:-0.250px;font-style:normal;transform:scaleX(0.9877);transform-origin:0 0;">Bouldering Course - 8 weeks</div>
<div class="t" style="left:649.30px;top:372.69px;font-size:13px;line-height:13px;color:#3c3c3c;font-weight:normal;letter-spacing:-0.250px;font-style:normal;transform:scaleX(0.9958);transform-origin:0 0;">2026-03-02</div>
<div class="t" style="left:762.20px;top:372.69px;font-size:13px;line-height:13px;color:#3c3c3c;font-weight:normal;letter-spacing:-0.250px;font-style:normal;transform:scaleX(0.9958);transform-origin:0 0;">2026-04-20</div>
<div class="t" style="left:874.40px;top:372.69px;font-size:13px;line-height:13px;color:#3c3c3c;font-weight:normal;letter-spacing:-0.250px;font-style:normal;transform:scaleX(0.9879);transform-origin:0 0;">10</div>
<div class="b" style="left:242.20px;top:404.02px;width:16.00px;height:16.00px;background:#d9dde2;border:1px solid #c3c9d0;border-radius:3.5px;"></div>
<div class="t" style="left:293.00px;top:405.07px;font-size:13px;line-height:13px;color:#3c3c3c;font-weight:normal;letter-spacing:0.000px;font-style:normal;">485</div>
<div class="t" style="left:383.20px;top:405.07px;font-size:13px;line-height:13px;color:#3c3c3c;font-weight:normal;letter-spacing:-0.250px;font-style:normal;transform:scaleX(0.9877);transform-origin:0 0;">Bouldering Course - 8 weeks</div>
<div class="t" style="left:649.30px;top:405.07px;font-size:13px;line-height:13px;color:#3c3c3c;font-weight:normal;letter-spacing:-0.250px;font-style:normal;transform:scaleX(0.9958);transform-origin:0 0;">2026-03-02</div>
<div class="t" style="left:762.20px;top:405.07px;font-size:13px;line-height:13px;color:#3c3c3c;font-weight:normal;letter-spacing:-0.250px;font-style:normal;transform:scaleX(0.9958);transform-origin:0 0;">2026-04-20</div>
<div class="t" style="left:874.40px;top:405.07px;font-size:13px;line-height:13px;color:#3c3c3c;font-weight:normal;letter-spacing:-0.250px;font-style:normal;transform:scaleX(0.9879);transform-origin:0 0;">10</div>
<div class="b" style="left:242.20px;top:436.40px;width:16.00px;height:16.00px;background:#d9dde2;border:1px solid #c3c9d0;border-radius:3.5px;"></div>
<div class="t" style="left:293.00px;top:437.45px;font-size:13px;line-height:13px;color:#3c3c3c;font-weight:normal;letter-spacing:0.000px;font-style:normal;">486</div>
<div class="t" style="left:383.20px;top:437.45px;font-size:13px;line-height:13px;color:#3c3c3c;font-weight:normal;letter-spacing:-0.119px;font-style:normal;">Swimming School for Adults</div>
<div class="t" style="left:649.30px;top:437.45px;font-size:13px;line-height:13px;color:#3c3c3c;font-weight:normal;letter-spacing:-0.250px;font-style:normal;transform:scaleX(0.9958);transform-origin:0 0;">2026-03-02</div>
<div class="t" style="left:762.20px;top:437.45px;font-size:13px;line-height:13px;color:#3c3c3c;font-weight:normal;letter-spacing:-0.250px;font-style:normal;transform:scaleX(0.9958);transform-origin:0 0;">2026-04-20</div>
<div class="t" style="left:874.40px;top:437.45px;font-size:13px;line-height:13px;color:#3c3c3c;font-weight:normal;letter-spacing:-0.250px;font-style:normal;transform:scaleX(0.9879);transform-origin:0 0;">10</div>
<div class="b" style="left:242.20px;top:468.78px;width:16.00px;height:16.00px;background:#d9dde2;border:1px solid #c3c9d0;border-radius:3.5px;"></div>
<div class="t" style="left:293.00px;top:469.83px;font-size:13px;line-height:13px;color:#3c3c3c;font-weight:normal;letter-spacing:0.000px;font-style:normal;">487</div>
<div class="t" style="left:383.20px;top:469.83px;font-size:13px;line-height:13px;color:#3c3c3c;font-weight:normal;letter-spacing:-0.119px;font-style:normal;">Swimming School for Adults</div>
<div class="t" style="left:649.30px;top:469.83px;font-size:13px;line-height:13px;color:#3c3c3c;font-weight:normal;letter-spacing:-0.250px;font-style:normal;transform:scaleX(0.9958);transform-origin:0 0;">2026-04-06</div>
<div class="t" style="left:762.20px;top:469.83px;font-size:13px;line-height:13px;color:#3c3c3c;font-weight:normal;letter-spacing:-0.250px;font-style:normal;transform:scaleX(0.9958);transform-origin:0 0;">2026-05-25</div>
<div class="t" style="left:874.40px;top:469.83px;font-size:13px;line-height:13px;color:#3c3c3c;font-weight:normal;letter-spacing:-0.250px;font-style:normal;transform:scaleX(0.9573);transform-origin:0 0;">0</div>
<div class="b" style="left:242.20px;top:501.16px;width:16.00px;height:16.00px;background:#d9dde2;border:1px solid #c3c9d0;border-radius:3.5px;"></div>
<div class="t" style="left:293.00px;top:502.21px;font-size:13px;line-height:13px;color:#3c3c3c;font-weight:normal;letter-spacing:0.000px;font-style:normal;">488</div>
<div class="t" style="left:383.20px;top:502.21px;font-size:13px;line-height:13px;color:#3c3c3c;font-weight:normal;letter-spacing:-0.250px;font-style:normal;transform:scaleX(0.9877);transform-origin:0 0;">Bouldering Course - 8 weeks</div>
<div class="t" style="left:649.30px;top:502.21px;font-size:13px;line-height:13px;color:#3c3c3c;font-weight:normal;letter-spacing:-0.250px;font-style:normal;transform:scaleX(0.9958);transform-origin:0 0;">2026-04-06</div>
<div class="t" style="left:762.20px;top:502.21px;font-size:13px;line-height:13px;color:#3c3c3c;font-weight:normal;letter-spacing:-0.250px;font-style:normal;transform:scaleX(0.9958);transform-origin:0 0;">2026-05-25</div>
<div class="t" style="left:874.40px;top:502.21px;font-size:13px;line-height:13px;color:#3c3c3c;font-weight:normal;letter-spacing:-0.250px;font-style:normal;transform:scaleX(0.9573);transform-origin:0 0;">0</div>
<div class="b" style="left:242.20px;top:533.54px;width:16.00px;height:16.00px;background:#d9dde2;border:1px solid #c3c9d0;border-radius:3.5px;"></div>
<div class="t" style="left:293.00px;top:534.59px;font-size:13px;line-height:13px;color:#3c3c3c;font-weight:normal;letter-spacing:0.000px;font-style:normal;">489</div>
<div class="t" style="left:383.20px;top:534.59px;font-size:13px;line-height:13px;color:#3c3c3c;font-weight:normal;letter-spacing:-0.250px;font-style:normal;transform:scaleX(0.9877);transform-origin:0 0;">Bouldering Course - 8 weeks</div>
<div class="t" style="left:649.30px;top:534.59px;font-size:13px;line-height:13px;color:#3c3c3c;font-weight:normal;letter-spacing:-0.250px;font-style:normal;transform:scaleX(0.9958);transform-origin:0 0;">2026-04-06</div>
<div class="t" style="left:762.20px;top:534.59px;font-size:13px;line-height:13px;color:#3c3c3c;font-weight:normal;letter-spacing:-0.250px;font-style:normal;transform:scaleX(0.9958);transform-origin:0 0;">2026-05-25</div>
<div class="t" style="left:874.40px;top:534.59px;font-size:13px;line-height:13px;color:#3c3c3c;font-weight:normal;letter-spacing:-0.250px;font-style:normal;transform:scaleX(0.9879);transform-origin:0 0;">10</div>
<div class="b" style="left:242.20px;top:565.92px;width:16.00px;height:16.00px;background:#d9dde2;border:1px solid #c3c9d0;border-radius:3.5px;"></div>
<div class="t" style="left:293.00px;top:566.97px;font-size:13px;line-height:13px;color:#3c3c3c;font-weight:normal;letter-spacing:0.000px;font-style:normal;">490</div>
<div class="t" style="left:383.20px;top:566.97px;font-size:13px;line-height:13px;color:#3c3c3c;font-weight:normal;letter-spacing:-0.250px;font-style:normal;transform:scaleX(0.9959);transform-origin:0 0;">Bootcamp - 8 weeks</div>
<div class="t" style="left:649.30px;top:566.97px;font-size:13px;line-height:13px;color:#3c3c3c;font-weight:normal;letter-spacing:-0.250px;font-style:normal;transform:scaleX(0.9958);transform-origin:0 0;">2026-04-06</div>
<div class="t" style="left:762.20px;top:566.97px;font-size:13px;line-height:13px;color:#3c3c3c;font-weight:normal;letter-spacing:-0.250px;font-style:normal;transform:scaleX(0.9958);transform-origin:0 0;">2026-05-25</div>
<div class="t" style="left:874.40px;top:566.97px;font-size:13px;line-height:13px;color:#3c3c3c;font-weight:normal;letter-spacing:-0.250px;font-style:normal;transform:scaleX(0.9879);transform-origin:0 0;">10</div>
<div class="b" style="left:224.00px;top:846.00px;width:718.00px;height:15.00px;background:#fafafa;"></div>
<svg class="b" style="left:228.00px;top:848.80px;" width="8" height="9.4" viewBox="0 0 8 9.4"><path d="M1 4.7 L7 0.8 V8.6Z" fill="#8a8a8a" stroke="#8a8a8a" stroke-width="1.2" stroke-linejoin="round"/></svg>
<div class="b" style="left:241.90px;top:848.90px;width:417.50px;height:9.20px;background:#8a8a8a;border-radius:4.6px;"></div>
<svg class="b" style="left:929.50px;top:848.80px;" width="8" height="9.4" viewBox="0 0 8 9.4"><path d="M7 4.7 L1 0.8 V8.6Z" fill="#8a8a8a" stroke="#8a8a8a" stroke-width="1.2" stroke-linejoin="round"/></svg>
<div class="b" style="left:224.00px;top:861.00px;width:718.00px;height:44.00px;background:#f2f4f6;"></div>
<div class="t" style="left:239.30px;top:878.00px;font-size:13px;line-height:13px;color:#333;font-weight:normal;letter-spacing:-0.188px;font-style:normal;">Number of:</div>
<div class="t" style="left:317.00px;top:878.00px;font-size:13px;line-height:13px;color:#333;font-weight:normal;letter-spacing:-0.250px;font-style:normal;transform:scaleX(0.9667);transform-origin:0 0;">14</div>
<div class="b" style="left:942.00px;top:42.00px;width:968.00px;height:863.00px;background:#fff;box-shadow:-1px 0 6px rgba(40,60,90,0.16), -3px 0 16px rgba(40,60,90,0.12);"></div>
<div class="b" style="left:942.00px;top:43.00px;width:968.00px;height:52.30px;background:#f1f8fc;"></div>
<div class="b" style="left:942.00px;top:95.10px;width:968.00px;height:1.00px;background:#dfe6ee;"></div>
<div class="b" style="left:957px;top:50px;width:38px;height:38px;border-radius:50%;background:#333;"></div>
<svg class="b" style="left:955.00px;top:48.00px;" width="42" height="42" viewBox="0 0 42 42"><rect x="11.65" y="12.35" width="17.7" height="16.8" fill="none" stroke="#fff" stroke-width="1.1"/><rect x="11.1" y="11.8" width="18.8" height="7" fill="#fff"/><rect x="13.4" y="11.8" width="3.8" height="3.5" fill="#333"/><rect x="23.6" y="11.8" width="3.8" height="3.5" fill="#333"/><rect x="14.8" y="10.9" width="1.1" height="4.2" fill="#fff"/><rect x="25" y="10.9" width="1.1" height="4.2" fill="#fff"/><circle cx="25.3" cy="25.1" r="4.6" fill="#333" stroke="#fff" stroke-width="1.1"/><path d="M25.4 22.1 V25.6 H27.7" fill="none" stroke="#fff" stroke-width="1.1"/></svg>
<div class="t" style="left:1017.74px;top:53.11px;font-size:17px;line-height:17px;color:#222;font-weight:normal;letter-spacing:-0.250px;font-style:normal;-webkit-text-stroke:0.25px #222;transform:scaleX(0.9766);transform-origin:0 0;">Bootcamp - 8 weeks</div>
<svg class="b" style="left:1746.30px;top:62.00px;" width="9.4" height="13" viewBox="0 0 9.4 13"><path d="M8 1.2 L2.2 6.5 L8 11.8" fill="none" stroke="#1a6fc0" stroke-width="2.4"/></svg>
<div class="t" style="left:1775.20px;top:62.70px;font-size:13px;line-height:13px;color:#2a6fb8;font-weight:normal;letter-spacing:0.000px;font-style:italic;">7</div>
<div class="t" style="left:1791.20px;top:62.45px;font-size:14px;line-height:14px;color:#2a6fb8;font-weight:normal;letter-spacing:0.000px;font-style:italic;">/</div>
<div class="t" style="left:1803.60px;top:62.70px;font-size:13px;line-height:13px;color:#2a6fb8;font-weight:normal;letter-spacing:0.000px;font-style:italic;">14</div>
<svg class="b" style="left:1836.00px;top:62.00px;" width="9.4" height="13" viewBox="0 0 9.4 13"><path d="M1.4 1.2 L7.2 6.5 L1.4 11.8" fill="none" stroke="#1a6fc0" stroke-width="2.4"/></svg>
<svg class="b" style="left:1883.80px;top:63.90px;" width="12.2" height="11.6" viewBox="0 0 12.2 11.6"><path d="M1 1 L11.2 10.6 M11.2 1 L1 10.6" fill="none" stroke="#1a6fc0" stroke-width="2.2"/></svg>
<div class="t" style="left:960.85px;top:105.80px;font-size:13px;line-height:13px;color:#1a6fc0;font-weight:normal;letter-spacing:-0.107px;font-style:normal;-webkit-text-stroke:0.15px #1a6fc0;">Base information</div>
<div class="t" style="left:1071.20px;top:105.80px;font-size:13px;line-height:13px;color:#5a6472;font-weight:normal;letter-spacing:-0.175px;font-style:normal;">Bookings</div>
<div class="t" style="left:1138.70px;top:105.80px;font-size:13px;line-height:13px;color:#5a6472;font-weight:normal;letter-spacing:-0.025px;font-style:normal;">Participant</div>
<div class="t" style="left:1214.50px;top:105.80px;font-size:13px;line-height:13px;color:#5a6472;font-weight:normal;letter-spacing:0.004px;font-style:normal;">Waiting list</div>
<div class="t" style="left:1291.80px;top:105.80px;font-size:13px;line-height:13px;color:#5a6472;font-weight:normal;letter-spacing:-0.250px;font-style:normal;">Supplement</div>
<div class="t" style="left:1373.90px;top:105.80px;font-size:13px;line-height:13px;color:#5a6472;font-weight:normal;letter-spacing:-0.250px;font-style:normal;transform:scaleX(0.9886);transform-origin:0 0;">Advanced</div>
<div class="t" style="left:1444.00px;top:105.80px;font-size:13px;line-height:13px;color:#5a6472;font-weight:normal;letter-spacing:0.030px;font-style:normal;">History</div>
<div class="b" style="left:942.00px;top:127.60px;width:968.00px;height:1.00px;background:#e3e8ee;"></div>
<div class="b" style="left:994.00px;top:126.80px;width:28.00px;height:2.00px;background:#1a6fc0;border-radius:1px;"></div>
<div class="t" style="left:956.69px;top:141.57px;font-size:11.5px;line-height:11.5px;color:#262a30;font-weight:normal;letter-spacing:-0.250px;font-style:normal;-webkit-text-stroke:0.2px #262a30;transform:scaleX(0.9597);transform-origin:0 0;">Number</div>
<svg class="b" style="left:956.00px;top:159.00px;" width="165" height="29" viewBox="0 0 165 29"><rect x="0.5" y="0.5" width="164" height="28" rx="2.5" fill="#fff" stroke="#c3c8cf" stroke-width="1" stroke-dasharray="3 2"/></svg>
<div class="t" style="left:963.40px;top:167.10px;font-size:13px;line-height:13px;color:#59616c;font-weight:normal;letter-spacing:-0.250px;font-style:normal;transform:scaleX(0.9843);transform-origin:0 0;">479</div>
<div class="t" style="left:956.69px;top:204.57px;font-size:11.5px;line-height:11.5px;color:#262a30;font-weight:normal;letter-spacing:-0.250px;font-style:normal;-webkit-text-stroke:0.2px #262a30;transform:scaleX(0.9609);transform-origin:0 0;">Product</div>
<div class="b" style="left:998.50px;top:208.30px;width:3px;height:3px;border-radius:50%;background:#1a6fc0;"></div>
<div class="b" style="left:956.00px;top:222.00px;width:338.00px;height:29.00px;border:1px solid #c9ced6;border-radius:3px;background:#fff;"></div>
<div class="t" style="left:963.40px;top:230.10px;font-size:13px;line-height:13px;color:#4b5360;font-weight:normal;letter-spacing:-0.242px;font-style:normal;">Bootcamp - 8 weeks</div>
<svg class="b" style="left:1255.60px;top:232.20px;" width="9" height="8.2" viewBox="0 0 9 8.2"><path d="M0.5 0.5 L8.5 7.7 M8.5 0.5 L0.5 7.7" fill="none" stroke="#58616e" stroke-width="1.25"/></svg>
<svg class="b" style="left:1274.70px;top:234.20px;" width="9.8" height="5.2" viewBox="0 0 9.8 5.2"><path d="M0.5 0.5 L4.9 4.6 L9.3 0.5" fill="none" stroke="#58616e" stroke-width="1.25"/></svg>
<div class="t" style="left:956.70px;top:267.57px;font-size:11.5px;line-height:11.5px;color:#262a30;font-weight:normal;letter-spacing:-0.250px;font-style:normal;-webkit-text-stroke:0.2px #262a30;transform:scaleX(0.9765);transform-origin:0 0;">Facility</div>
<div class="b" style="left:994.50px;top:271.30px;width:3px;height:3px;border-radius:50%;background:#1a6fc0;"></div>
<div class="b" style="left:956.00px;top:285.00px;width:338.00px;height:29.00px;border:1px solid #c9ced6;border-radius:3px;background:#fff;"></div>
<div class="t" style="left:963.40px;top:293.10px;font-size:13px;line-height:13px;color:#4b5360;font-weight:normal;letter-spacing:-0.243px;font-style:normal;">Gymmore Linköping</div>
<svg class="b" style="left:1255.60px;top:295.20px;" width="9" height="8.2" viewBox="0 0 9 8.2"><path d="M0.5 0.5 L8.5 7.7 M8.5 0.5 L0.5 7.7" fill="none" stroke="#58616e" stroke-width="1.25"/></svg>
<svg class="b" style="left:1274.70px;top:297.20px;" width="9.8" height="5.2" viewBox="0 0 9.8 5.2"><path d="M0.5 0.5 L4.9 4.6 L9.3 0.5" fill="none" stroke="#58616e" stroke-width="1.25"/></svg>
<div class="t" style="left:956.69px;top:330.57px;font-size:11.5px;line-height:11.5px;color:#262a30;font-weight:normal;letter-spacing:-0.250px;font-style:normal;-webkit-text-stroke:0.2px #262a30;transform:scaleX(0.9534);transform-origin:0 0;">Responsible</div>
<div class="b" style="left:1019.50px;top:334.30px;width:3px;height:3px;border-radius:50%;background:#1a6fc0;"></div>
<div class="b" style="left:956.00px;top:348.00px;width:338.00px;height:29.00px;border:1px solid #c9ced6;border-radius:3px;background:#fff;"></div>
<div class="t" style="left:963.40px;top:356.10px;font-size:13px;line-height:13px;color:#4b5360;font-weight:normal;letter-spacing:-0.250px;font-style:normal;transform:scaleX(0.9805);transform-origin:0 0;">Johan BRP-Cederberg (!)</div>
<svg class="b" style="left:1255.60px;top:358.20px;" width="9" height="8.2" viewBox="0 0 9 8.2"><path d="M0.5 0.5 L8.5 7.7 M8.5 0.5 L0.5 7.7" fill="none" stroke="#58616e" stroke-width="1.25"/></svg>
<svg class="b" style="left:1274.70px;top:360.20px;" width="9.8" height="5.2" viewBox="0 0 9.8 5.2"><path d="M0.5 0.5 L4.9 4.6 L9.3 0.5" fill="none" stroke="#58616e" stroke-width="1.25"/></svg>
<div class="t" style="left:956.69px;top:393.57px;font-size:11.5px;line-height:11.5px;color:#262a30;font-weight:normal;letter-spacing:-0.250px;font-style:normal;-webkit-text-stroke:0.2px #262a30;transform:scaleX(0.9617);transform-origin:0 0;">Start day</div>
<div class="b" style="left:1003.50px;top:397.30px;width:3px;height:3px;border-radius:50%;background:#1a6fc0;"></div>
<div class="b" style="left:956.00px;top:411.00px;width:165.00px;height:29.00px;border:1px solid #c9ced6;border-radius:3px;background:#fff;"></div>
<div class="t" style="left:963.40px;top:419.10px;font-size:13px;line-height:13px;color:#4b5360;font-weight:normal;letter-spacing:-0.114px;font-style:normal;">2026-01-05</div>
<svg class="b" style="left:1100.50px;top:417.40px;" width="12.6" height="13.4" viewBox="0 0 12.6 13.4"><rect x="0" y="1.8" width="12.6" height="2" fill="#6b7583"/><rect x="2.2" y="0.6" width="1.2" height="1.6" fill="#6b7583"/><rect x="9.2" y="0.6" width="1.2" height="1.6" fill="#6b7583"/><rect x="0.40" y="4.6" width="1.1" height="8.6" fill="#6b7583" opacity="0.35"/><rect x="2.70" y="4.6" width="1.1" height="8.6" fill="#6b7583" opacity="0.35"/><rect x="5.00" y="4.6" width="1.1" height="8.6" fill="#6b7583" opacity="0.35"/><rect x="7.30" y="4.6" width="1.1" height="8.6" fill="#6b7583" opacity="0.35"/><rect x="9.60" y="4.6" width="1.1" height="8.6" fill="#6b7583" opacity="0.35"/><rect x="11.90" y="4.6" width="1.1" height="8.6" fill="#6b7583" opacity="0.35"/><rect x="0.30" y="4.60" width="1.3" height="1.2" fill="#6b7583"/><rect x="2.60" y="4.60" width="1.3" height="1.2" fill="#6b7583"/><rect x="4.90" y="4.60" width="1.3" height="1.2" fill="#6b7583"/><rect x="7.20" y="4.60" width="1.3" height="1.2" fill="#6b7583"/><rect x="9.50" y="4.60" width="1.3" height="1.2" fill="#6b7583"/><rect x="11.80" y="4.60" width="1.3" height="1.2" fill="#6b7583"/><rect x="0.30" y="7.10" width="1.3" height="1.2" fill="#6b7583"/><rect x="2.60" y="7.10" width="1.3" height="1.2" fill="#6b7583"/><rect x="4.90" y="7.10" width="1.3" height="1.2" fill="#6b7583"/><rect x="7.20" y="7.10" width="1.3" height="1.2" fill="#6b7583"/><rect x="9.50" y="7.10" width="1.3" height="1.2" fill="#6b7583"/><rect x="11.80" y="7.10" width="1.3" height="1.2" fill="#6b7583"/><rect x="0.30" y="9.60" width="1.3" height="1.2" fill="#6b7583"/><rect x="2.60" y="9.60" width="1.3" height="1.2" fill="#6b7583"/><rect x="4.90" y="9.60" width="1.3" height="1.2" fill="#6b7583"/><rect x="7.20" y="9.60" width="1.3" height="1.2" fill="#6b7583"/><rect x="9.50" y="9.60" width="1.3" height="1.2" fill="#6b7583"/><rect x="11.80" y="9.60" width="1.3" height="1.2" fill="#6b7583"/><rect x="0.30" y="12.10" width="1.3" height="1.2" fill="#6b7583"/><rect x="2.60" y="12.10" width="1.3" height="1.2" fill="#6b7583"/><rect x="4.90" y="12.10" width="1.3" height="1.2" fill="#6b7583"/><rect x="7.20" y="12.10" width="1.3" height="1.2" fill="#6b7583"/><rect x="9.50" y="12.10" width="1.3" height="1.2" fill="#6b7583"/><rect x="11.80" y="12.10" width="1.3" height="1.2" fill="#6b7583"/></svg>
<div class="t" style="left:956.68px;top:456.57px;font-size:11.5px;line-height:11.5px;color:#262a30;font-weight:normal;letter-spacing:-0.250px;font-style:normal;-webkit-text-stroke:0.2px #262a30;transform:scaleX(0.9021);transform-origin:0 0;">End day</div>
<div class="b" style="left:998.00px;top:460.30px;width:3px;height:3px;border-radius:50%;background:#1a6fc0;"></div>
<div class="b" style="left:956.00px;top:474.00px;width:165.00px;height:29.00px;border:1px solid #c9ced6;border-radius:3px;background:#fff;"></div>
<div class="t" style="left:963.40px;top:482.10px;font-size:13px;line-height:13px;color:#4b5360;font-weight:normal;letter-spacing:-0.114px;font-style:normal;">2026-02-23</div>
<svg class="b" style="left:1100.50px;top:480.40px;" width="12.6" height="13.4" viewBox="0 0 12.6 13.4"><rect x="0" y="1.8" width="12.6" height="2" fill="#6b7583"/><rect x="2.2" y="0.6" width="1.2" height="1.6" fill="#6b7583"/><rect x="9.2" y="0.6" width="1.2" height="1.6" fill="#6b7583"/><rect x="0.40" y="4.6" width="1.1" height="8.6" fill="#6b7583" opacity="0.35"/><rect x="2.70" y="4.6" width="1.1" height="8.6" fill="#6b7583" opacity="0.35"/><rect x="5.00" y="4.6" width="1.1" height="8.6" fill="#6b7583" opacity="0.35"/><rect x="7.30" y="4.6" width="1.1" height="8.6" fill="#6b7583" opacity="0.35"/><rect x="9.60" y="4.6" width="1.1" height="8.6" fill="#6b7583" opacity="0.35"/><rect x="11.90" y="4.6" width="1.1" height="8.6" fill="#6b7583" opacity="0.35"/><rect x="0.30" y="4.60" width="1.3" height="1.2" fill="#6b7583"/><rect x="2.60" y="4.60" width="1.3" height="1.2" fill="#6b7583"/><rect x="4.90" y="4.60" width="1.3" height="1.2" fill="#6b7583"/><rect x="7.20" y="4.60" width="1.3" height="1.2" fill="#6b7583"/><rect x="9.50" y="4.60" width="1.3" height="1.2" fill="#6b7583"/><rect x="11.80" y="4.60" width="1.3" height="1.2" fill="#6b7583"/><rect x="0.30" y="7.10" width="1.3" height="1.2" fill="#6b7583"/><rect x="2.60" y="7.10" width="1.3" height="1.2" fill="#6b7583"/><rect x="4.90" y="7.10" width="1.3" height="1.2" fill="#6b7583"/><rect x="7.20" y="7.10" width="1.3" height="1.2" fill="#6b7583"/><rect x="9.50" y="7.10" width="1.3" height="1.2" fill="#6b7583"/><rect x="11.80" y="7.10" width="1.3" height="1.2" fill="#6b7583"/><rect x="0.30" y="9.60" width="1.3" height="1.2" fill="#6b7583"/><rect x="2.60" y="9.60" width="1.3" height="1.2" fill="#6b7583"/><rect x="4.90" y="9.60" width="1.3" height="1.2" fill="#6b7583"/><rect x="7.20" y="9.60" width="1.3" height="1.2" fill="#6b7583"/><rect x="9.50" y="9.60" width="1.3" height="1.2" fill="#6b7583"/><rect x="11.80" y="9.60" width="1.3" height="1.2" fill="#6b7583"/><rect x="0.30" y="12.10" width="1.3" height="1.2" fill="#6b7583"/><rect x="2.60" y="12.10" width="1.3" height="1.2" fill="#6b7583"/><rect x="4.90" y="12.10" width="1.3" height="1.2" fill="#6b7583"/><rect x="7.20" y="12.10" width="1.3" height="1.2" fill="#6b7583"/><rect x="9.50" y="12.10" width="1.3" height="1.2" fill="#6b7583"/><rect x="11.80" y="12.10" width="1.3" height="1.2" fill="#6b7583"/></svg>
<div class="t" style="left:956.70px;top:519.57px;font-size:11.5px;line-height:11.5px;color:#262a30;font-weight:normal;letter-spacing:-0.250px;font-style:normal;-webkit-text-stroke:0.2px #262a30;transform:scaleX(0.9848);transform-origin:0 0;">Publish interval</div>
<div class="b" style="left:1034.80px;top:523.30px;width:3px;height:3px;border-radius:50%;background:#1a6fc0;"></div>
<div class="b" style="left:956.00px;top:537.00px;width:168.50px;height:29.00px;border:1px solid #c9ced6;border-radius:3px 1.5px 1.5px 3px;background:#fff;"></div>
<div class="t" style="left:963.40px;top:545.10px;font-size:13px;line-height:13px;color:#4b5360;font-weight:normal;letter-spacing:0.045px;font-style:normal;">2025-11-11</div>
<svg class="b" style="left:1103.30px;top:543.40px;" width="12.6" height="13.4" viewBox="0 0 12.6 13.4"><rect x="0" y="1.8" width="12.6" height="2" fill="#6b7583"/><rect x="2.2" y="0.6" width="1.2" height="1.6" fill="#6b7583"/><rect x="9.2" y="0.6" width="1.2" height="1.6" fill="#6b7583"/><rect x="0.40" y="4.6" width="1.1" height="8.6" fill="#6b7583" opacity="0.35"/><rect x="2.70" y="4.6" width="1.1" height="8.6" fill="#6b7583" opacity="0.35"/><rect x="5.00" y="4.6" width="1.1" height="8.6" fill="#6b7583" opacity="0.35"/><rect x="7.30" y="4.6" width="1.1" height="8.6" fill="#6b7583" opacity="0.35"/><rect x="9.60" y="4.6" width="1.1" height="8.6" fill="#6b7583" opacity="0.35"/><rect x="11.90" y="4.6" width="1.1" height="8.6" fill="#6b7583" opacity="0.35"/><rect x="0.30" y="4.60" width="1.3" height="1.2" fill="#6b7583"/><rect x="2.60" y="4.60" width="1.3" height="1.2" fill="#6b7583"/><rect x="4.90" y="4.60" width="1.3" height="1.2" fill="#6b7583"/><rect x="7.20" y="4.60" width="1.3" height="1.2" fill="#6b7583"/><rect x="9.50" y="4.60" width="1.3" height="1.2" fill="#6b7583"/><rect x="11.80" y="4.60" width="1.3" height="1.2" fill="#6b7583"/><rect x="0.30" y="7.10" width="1.3" height="1.2" fill="#6b7583"/><rect x="2.60" y="7.10" width="1.3" height="1.2" fill="#6b7583"/><rect x="4.90" y="7.10" width="1.3" height="1.2" fill="#6b7583"/><rect x="7.20" y="7.10" width="1.3" height="1.2" fill="#6b7583"/><rect x="9.50" y="7.10" width="1.3" height="1.2" fill="#6b7583"/><rect x="11.80" y="7.10" width="1.3" height="1.2" fill="#6b7583"/><rect x="0.30" y="9.60" width="1.3" height="1.2" fill="#6b7583"/><rect x="2.60" y="9.60" width="1.3" height="1.2" fill="#6b7583"/><rect x="4.90" y="9.60" width="1.3" height="1.2" fill="#6b7583"/><rect x="7.20" y="9.60" width="1.3" height="1.2" fill="#6b7583"/><rect x="9.50" y="9.60" width="1.3" height="1.2" fill="#6b7583"/><rect x="11.80" y="9.60" width="1.3" height="1.2" fill="#6b7583"/><rect x="0.30" y="12.10" width="1.3" height="1.2" fill="#6b7583"/><rect x="2.60" y="12.10" width="1.3" height="1.2" fill="#6b7583"/><rect x="4.90" y="12.10" width="1.3" height="1.2" fill="#6b7583"/><rect x="7.20" y="12.10" width="1.3" height="1.2" fill="#6b7583"/><rect x="9.50" y="12.10" width="1.3" height="1.2" fill="#6b7583"/><rect x="11.80" y="12.10" width="1.3" height="1.2" fill="#6b7583"/></svg>
<div class="b" style="left:1124.00px;top:537.00px;width:168.00px;height:29.00px;border:1px solid #c9ced6;border-radius:1.5px 3px 3px 1.5px;background:#fff;"></div>
<div class="t" style="left:1131.40px;top:545.10px;font-size:13px;line-height:13px;color:#4b5360;font-weight:normal;letter-spacing:0.000px;font-style:normal;">10:56</div>
<svg class="b" style="left:1270.60px;top:544.60px;" width="13.5" height="13.5" viewBox="0 0 13.5 13.5"><circle cx="6.75" cy="6.75" r="5.9" fill="none" stroke="#6b7583" stroke-width="1.4"/><path d="M6.5 3.4 V7.1 H9.6" fill="none" stroke="#6b7583" stroke-width="1.3"/></svg>
<div class="b" style="left:1294.10px;top:550.80px;width:6.80px;height:1.00px;background:#cdd2d9;"></div>
<div class="b" style="left:1303.00px;top:537.00px;width:168.50px;height:29.00px;border:1px solid #c9ced6;border-radius:3px 1.5px 1.5px 3px;background:#fff;"></div>
<div class="t" style="left:1310.40px;top:545.10px;font-size:13px;line-height:13px;color:#4b5360;font-weight:normal;letter-spacing:-0.114px;font-style:normal;">2026-01-06</div>
<svg class="b" style="left:1450.30px;top:543.40px;" width="12.6" height="13.4" viewBox="0 0 12.6 13.4"><rect x="0" y="1.8" width="12.6" height="2" fill="#6b7583"/><rect x="2.2" y="0.6" width="1.2" height="1.6" fill="#6b7583"/><rect x="9.2" y="0.6" width="1.2" height="1.6" fill="#6b7583"/><rect x="0.40" y="4.6" width="1.1" height="8.6" fill="#6b7583" opacity="0.35"/><rect x="2.70" y="4.6" width="1.1" height="8.6" fill="#6b7583" opacity="0.35"/><rect x="5.00" y="4.6" width="1.1" height="8.6" fill="#6b7583" opacity="0.35"/><rect x="7.30" y="4.6" width="1.1" height="8.6" fill="#6b7583" opacity="0.35"/><rect x="9.60" y="4.6" width="1.1" height="8.6" fill="#6b7583" opacity="0.35"/><rect x="11.90" y="4.6" width="1.1" height="8.6" fill="#6b7583" opacity="0.35"/><rect x="0.30" y="4.60" width="1.3" height="1.2" fill="#6b7583"/><rect x="2.60" y="4.60" width="1.3" height="1.2" fill="#6b7583"/><rect x="4.90" y="4.60" width="1.3" height="1.2" fill="#6b7583"/><rect x="7.20" y="4.60" width="1.3" height="1.2" fill="#6b7583"/><rect x="9.50" y="4.60" width="1.3" height="1.2" fill="#6b7583"/><rect x="11.80" y="4.60" width="1.3" height="1.2" fill="#6b7583"/><rect x="0.30" y="7.10" width="1.3" height="1.2" fill="#6b7583"/><rect x="2.60" y="7.10" width="1.3" height="1.2" fill="#6b7583"/><rect x="4.90" y="7.10" width="1.3" height="1.2" fill="#6b7583"/><rect x="7.20" y="7.10" width="1.3" height="1.2" fill="#6b7583"/><rect x="9.50" y="7.10" width="1.3" height="1.2" fill="#6b7583"/><rect x="11.80" y="7.10" width="1.3" height="1.2" fill="#6b7583"/><rect x="0.30" y="9.60" width="1.3" height="1.2" fill="#6b7583"/><rect x="2.60" y="9.60" width="1.3" height="1.2" fill="#6b7583"/><rect x="4.90" y="9.60" width="1.3" height="1.2" fill="#6b7583"/><rect x="7.20" y="9.60" width="1.3" height="1.2" fill="#6b7583"/><rect x="9.50" y="9.60" width="1.3" height="1.2" fill="#6b7583"/><rect x="11.80" y="9.60" width="1.3" height="1.2" fill="#6b7583"/><rect x="0.30" y="12.10" width="1.3" height="1.2" fill="#6b7583"/><rect x="2.60" y="12.10" width="1.3" height="1.2" fill="#6b7583"/><rect x="4.90" y="12.10" width="1.3" height="1.2" fill="#6b7583"/><rect x="7.20" y="12.10" width="1.3" height="1.2" fill="#6b7583"/><rect x="9.50" y="12.10" width="1.3" height="1.2" fill="#6b7583"/><rect x="11.80" y="12.10" width="1.3" height="1.2" fill="#6b7583"/></svg>
<div class="b" style="left:1471.00px;top:537.00px;width:169.00px;height:29.00px;border:1px solid #c9ced6;border-radius:1.5px 3px 3px 1.5px;background:#fff;"></div>
<div class="t" style="left:1478.40px;top:545.10px;font-size:13px;line-height:13px;color:#4b5360;font-weight:normal;letter-spacing:0.000px;font-style:normal;">00:00</div>
<svg class="b" style="left:1617.60px;top:544.60px;" width="13.5" height="13.5" viewBox="0 0 13.5 13.5"><circle cx="6.75" cy="6.75" r="5.9" fill="none" stroke="#6b7583" stroke-width="1.4"/><path d="M6.5 3.4 V7.1 H9.6" fill="none" stroke="#6b7583" stroke-width="1.3"/></svg>
<div class="t" style="left:956.70px;top:582.57px;font-size:11.5px;line-height:11.5px;color:#262a30;font-weight:normal;letter-spacing:-0.250px;font-style:normal;-webkit-text-stroke:0.2px #262a30;transform:scaleX(0.9820);transform-origin:0 0;">Booking interval</div>
<div class="b" style="left:1038.30px;top:586.30px;width:3px;height:3px;border-radius:50%;background:#1a6fc0;"></div>
<div class="b" style="left:956.00px;top:600.00px;width:168.50px;height:29.00px;border:1px solid #c9ced6;border-radius:3px 1.5px 1.5px 3px;background:#fff;"></div>
<div class="t" style="left:963.40px;top:608.10px;font-size:13px;line-height:13px;color:#4b5360;font-weight:normal;letter-spacing:0.045px;font-style:normal;">2025-11-11</div>
<svg class="b" style="left:1103.30px;top:606.40px;" width="12.6" height="13.4" viewBox="0 0 12.6 13.4"><rect x="0" y="1.8" width="12.6" height="2" fill="#6b7583"/><rect x="2.2" y="0.6" width="1.2" height="1.6" fill="#6b7583"/><rect x="9.2" y="0.6" width="1.2" height="1.6" fill="#6b7583"/><rect x="0.40" y="4.6" width="1.1" height="8.6" fill="#6b7583" opacity="0.35"/><rect x="2.70" y="4.6" width="1.1" height="8.6" fill="#6b7583" opacity="0.35"/><rect x="5.00" y="4.6" width="1.1" height="8.6" fill="#6b7583" opacity="0.35"/><rect x="7.30" y="4.6" width="1.1" height="8.6" fill="#6b7583" opacity="0.35"/><rect x="9.60" y="4.6" width="1.1" height="8.6" fill="#6b7583" opacity="0.35"/><rect x="11.90" y="4.6" width="1.1" height="8.6" fill="#6b7583" opacity="0.35"/><rect x="0.30" y="4.60" width="1.3" height="1.2" fill="#6b7583"/><rect x="2.60" y="4.60" width="1.3" height="1.2" fill="#6b7583"/><rect x="4.90" y="4.60" width="1.3" height="1.2" fill="#6b7583"/><rect x="7.20" y="4.60" width="1.3" height="1.2" fill="#6b7583"/><rect x="9.50" y="4.60" width="1.3" height="1.2" fill="#6b7583"/><rect x="11.80" y="4.60" width="1.3" height="1.2" fill="#6b7583"/><rect x="0.30" y="7.10" width="1.3" height="1.2" fill="#6b7583"/><rect x="2.60" y="7.10" width="1.3" height="1.2" fill="#6b7583"/><rect x="4.90" y="7.10" width="1.3" height="1.2" fill="#6b7583"/><rect x="7.20" y="7.10" width="1.3" height="1.2" fill="#6b7583"/><rect x="9.50" y="7.10" width="1.3" height="1.2" fill="#6b7583"/><rect x="11.80" y="7.10" width="1.3" height="1.2" fill="#6b7583"/><rect x="0.30" y="9.60" width="1.3" height="1.2" fill="#6b7583"/><rect x="2.60" y="9.60" width="1.3" height="1.2" fill="#6b7583"/><rect x="4.90" y="9.60" width="1.3" height="1.2" fill="#6b7583"/><rect x="7.20" y="9.60" width="1.3" height="1.2" fill="#6b7583"/><rect x="9.50" y="9.60" width="1.3" height="1.2" fill="#6b7583"/><rect x="11.80" y="9.60" width="1.3" height="1.2" fill="#6b7583"/><rect x="0.30" y="12.10" width="1.3" height="1.2" fill="#6b7583"/><rect x="2.60" y="12.10" width="1.3" height="1.2" fill="#6b7583"/><rect x="4.90" y="12.10" width="1.3" height="1.2" fill="#6b7583"/><rect x="7.20" y="12.10" width="1.3" height="1.2" fill="#6b7583"/><rect x="9.50" y="12.10" width="1.3" height="1.2" fill="#6b7583"/><rect x="11.80" y="12.10" width="1.3" height="1.2" fill="#6b7583"/></svg>
<div class="b" style="left:1124.00px;top:600.00px;width:168.00px;height:29.00px;border:1px solid #c9ced6;border-radius:1.5px 3px 3px 1.5px;background:#fff;"></div>
<div class="t" style="left:1131.40px;top:608.10px;font-size:13px;line-height:13px;color:#4b5360;font-weight:normal;letter-spacing:0.000px;font-style:normal;">10:56</div>
<svg class="b" style="left:1270.60px;top:607.60px;" width="13.5" height="13.5" viewBox="0 0 13.5 13.5"><circle cx="6.75" cy="6.75" r="5.9" fill="none" stroke="#6b7583" stroke-width="1.4"/><path d="M6.5 3.4 V7.1 H9.6" fill="none" stroke="#6b7583" stroke-width="1.3"/></svg>
<div class="b" style="left:1294.10px;top:613.80px;width:6.80px;height:1.00px;background:#cdd2d9;"></div>
<div class="b" style="left:1303.00px;top:600.00px;width:168.50px;height:29.00px;border:1px solid #c9ced6;border-radius:3px 1.5px 1.5px 3px;background:#fff;"></div>
<div class="t" style="left:1310.40px;top:608.10px;font-size:13px;line-height:13px;color:#4b5360;font-weight:normal;letter-spacing:-0.114px;font-style:normal;">2026-01-06</div>
<svg class="b" style="left:1450.30px;top:606.40px;" width="12.6" height="13.4" viewBox="0 0 12.6 13.4"><rect x="0" y="1.8" width="12.6" height="2" fill="#6b7583"/><rect x="2.2" y="0.6" width="1.2" height="1.6" fill="#6b7583"/><rect x="9.2" y="0.6" width="1.2" height="1.6" fill="#6b7583"/><rect x="0.40" y="4.6" width="1.1" height="8.6" fill="#6b7583" opacity="0.35"/><rect x="2.70" y="4.6" width="1.1" height="8.6" fill="#6b7583" opacity="0.35"/><rect x="5.00" y="4.6" width="1.1" height="8.6" fill="#6b7583" opacity="0.35"/><rect x="7.30" y="4.6" width="1.1" height="8.6" fill="#6b7583" opacity="0.35"/><rect x="9.60" y="4.6" width="1.1" height="8.6" fill="#6b7583" opacity="0.35"/><rect x="11.90" y="4.6" width="1.1" height="8.6" fill="#6b7583" opacity="0.35"/><rect x="0.30" y="4.60" width="1.3" height="1.2" fill="#6b7583"/><rect x="2.60" y="4.60" width="1.3" height="1.2" fill="#6b7583"/><rect x="4.90" y="4.60" width="1.3" height="1.2" fill="#6b7583"/><rect x="7.20" y="4.60" width="1.3" height="1.2" fill="#6b7583"/><rect x="9.50" y="4.60" width="1.3" height="1.2" fill="#6b7583"/><rect x="11.80" y="4.60" width="1.3" height="1.2" fill="#6b7583"/><rect x="0.30" y="7.10" width="1.3" height="1.2" fill="#6b7583"/><rect x="2.60" y="7.10" width="1.3" height="1.2" fill="#6b7583"/><rect x="4.90" y="7.10" width="1.3" height="1.2" fill="#6b7583"/><rect x="7.20" y="7.10" width="1.3" height="1.2" fill="#6b7583"/><rect x="9.50" y="7.10" width="1.3" height="1.2" fill="#6b7583"/><rect x="11.80" y="7.10" width="1.3" height="1.2" fill="#6b7583"/><rect x="0.30" y="9.60" width="1.3" height="1.2" fill="#6b7583"/><rect x="2.60" y="9.60" width="1.3" height="1.2" fill="#6b7583"/><rect x="4.90" y="9.60" width="1.3" height="1.2" fill="#6b7583"/><rect x="7.20" y="9.60" width="1.3" height="1.2" fill="#6b7583"/><rect x="9.50" y="9.60" width="1.3" height="1.2" fill="#6b7583"/><rect x="11.80" y="9.60" width="1.3" height="1.2" fill="#6b7583"/><rect x="0.30" y="12.10" width="1.3" height="1.2" fill="#6b7583"/><rect x="2.60" y="12.10" width="1.3" height="1.2" fill="#6b7583"/><rect x="4.90" y="12.10" width="1.3" height="1.2" fill="#6b7583"/><rect x="7.20" y="12.10" width="1.3" height="1.2" fill="#6b7583"/><rect x="9.50" y="12.10" width="1.3" height="1.2" fill="#6b7583"/><rect x="11.80" y="12.10" width="1.3" height="1.2" fill="#6b7583"/></svg>
<div class="b" style="left:1471.00px;top:600.00px;width:169.00px;height:29.00px;border:1px solid #c9ced6;border-radius:1.5px 3px 3px 1.5px;background:#fff;"></div>
<div class="t" style="left:1478.40px;top:608.10px;font-size:13px;line-height:13px;color:#4b5360;font-weight:normal;letter-spacing:0.000px;font-style:normal;">00:00</div>
<svg class="b" style="left:1617.60px;top:607.60px;" width="13.5" height="13.5" viewBox="0 0 13.5 13.5"><circle cx="6.75" cy="6.75" r="5.9" fill="none" stroke="#6b7583" stroke-width="1.4"/><path d="M6.5 3.4 V7.1 H9.6" fill="none" stroke="#6b7583" stroke-width="1.3"/></svg>
<div class="t" style="left:956.70px;top:645.57px;font-size:11.5px;line-height:11.5px;color:#262a30;font-weight:normal;letter-spacing:-0.236px;font-style:normal;-webkit-text-stroke:0.2px #262a30;">Number of slots</div>
<div class="b" style="left:1038.00px;top:649.30px;width:3px;height:3px;border-radius:50%;background:#1a6fc0;"></div>
<div class="b" style="left:956.00px;top:663.00px;width:165.00px;height:29.00px;border:1px solid #c9ced6;border-radius:3px;background:#fff;"></div>
<div class="t" style="left:963.40px;top:671.10px;font-size:13px;line-height:13px;color:#4b5360;font-weight:normal;letter-spacing:0.000px;font-style:normal;">10</div>
<div class="t" style="left:956.70px;top:708.57px;font-size:11.5px;line-height:11.5px;color:#262a30;font-weight:normal;letter-spacing:-0.250px;font-style:normal;-webkit-text-stroke:0.2px #262a30;transform:scaleX(0.9840);transform-origin:0 0;">Booked slots</div>
<svg class="b" style="left:956.00px;top:726.00px;" width="165" height="29" viewBox="0 0 165 29"><rect x="0.5" y="0.5" width="164" height="28" rx="2.5" fill="#fff" stroke="#c3c8cf" stroke-width="1" stroke-dasharray="3 2"/></svg>
<div class="t" style="left:963.40px;top:734.10px;font-size:13px;line-height:13px;color:#59616c;font-weight:normal;letter-spacing:0.000px;font-style:normal;">0</div>
<div class="t" style="left:956.70px;top:771.57px;font-size:11.5px;line-height:11.5px;color:#262a30;font-weight:normal;letter-spacing:-0.244px;font-style:normal;-webkit-text-stroke:0.2px #262a30;">Available slots</div>
<svg class="b" style="left:956.00px;top:789.00px;" width="165" height="29" viewBox="0 0 165 29"><rect x="0.5" y="0.5" width="164" height="28" rx="2.5" fill="#fff" stroke="#c3c8cf" stroke-width="1" stroke-dasharray="3 2"/></svg>
<div class="t" style="left:963.40px;top:797.10px;font-size:13px;line-height:13px;color:#59616c;font-weight:normal;letter-spacing:0.000px;font-style:normal;">10</div>
<div class="t" style="left:956.70px;top:834.57px;font-size:11.5px;line-height:11.5px;color:#262a30;font-weight:normal;letter-spacing:-0.140px;font-style:normal;-webkit-text-stroke:0.2px #262a30;">Information</div>
<div class="b" style="left:956px;top:852px;width:684px;height:15px;overflow:hidden;"><div class="b" style="left:0;top:0;width:684px;height:60px;border:1px solid #c9ced6;border-radius:3px;"></div><div class="t" style="left:7.4px;top:7px;font-size:13px;line-height:16px;color:#4b5360;letter-spacing:-0.12px;">A fitness boot camp is a type of group physical training program that may be conducted by gyms, personal trainers or</div></div>
<div class="b" style="left:1898.80px;top:128.60px;width:11.20px;height:738.40px;background:#fafafa;"></div>
<svg class="b" style="left:1902.00px;top:133.70px;" width="8" height="7" viewBox="0 0 8 7"><path d="M4 0.3 L7.8 6.7 H0.2Z" fill="#8a8a8a"/></svg>
<div class="b" style="left:1902.00px;top:147.00px;width:10.00px;height:415.50px;background:#8a8a8a;border-radius:5px;"></div>
<svg class="b" style="left:1902.00px;top:855.00px;" width="8" height="7" viewBox="0 0 8 7"><path d="M4 6.7 L7.8 0.3 H0.2Z" fill="#8a8a8a"/></svg>
<div class="b" style="left:942.00px;top:866.90px;width:968.00px;height:38.10px;background:#f2f4f6;"></div>
<div class="b" style="left:956.00px;top:874.20px;width:80.60px;height:28.40px;background:#1a6fc0;border-radius:3px;"></div>
<div class="t" style="left:988.80px;top:880.90px;font-size:13px;line-height:13px;color:#fff;font-weight:bold;letter-spacing:-0.250px;font-style:normal;transform:scaleX(0.8364);transform-origin:0 0;">OK</div>
<div class="b" style="left:1044.50px;top:873.50px;width:57.40px;height:29.60px;background:#fff;border:1px solid #ccd2d9;border-radius:3px;"></div>
<div class="t" style="left:1060.11px;top:880.70px;font-size:13px;line-height:13px;color:#1a6fc0;font-weight:normal;letter-spacing:-0.250px;font-style:normal;-webkit-text-stroke:0.12px #1a6fc0;transform:scaleX(0.9264);transform-origin:0 0;">Save</div>
<div class="b" style="left:1108.90px;top:873.50px;width:58.30px;height:29.60px;background:#fff;border:1px solid #ccd2d9;border-radius:3px;"></div>
<div class="t" style="left:1123.11px;top:880.70px;font-size:13px;line-height:13px;color:#1a6fc0;font-weight:normal;letter-spacing:-0.250px;font-style:normal;-webkit-text-stroke:0.12px #1a6fc0;transform:scaleX(0.9431);transform-origin:0 0;">Close</div>
<div class="b" style="left:1173.60px;top:873.50px;width:60.60px;height:29.60px;background:#fff;border:1px solid #ccd2d9;border-radius:3px;"></div>
<div class="t" style="left:1186.02px;top:880.70px;font-size:13px;line-height:13px;color:#1a6fc0;font-weight:normal;letter-spacing:-0.250px;font-style:normal;-webkit-text-stroke:0.12px #1a6fc0;transform:scaleX(0.9634);transform-origin:0 0;">Report</div>
<div class="b" style="left:1241.50px;top:873.50px;width:85.80px;height:29.60px;background:#fff;border:1px solid #ccd2d9;border-radius:3px;"></div>
<div class="t" style="left:1253.32px;top:880.70px;font-size:13px;line-height:13px;color:#1a6fc0;font-weight:normal;letter-spacing:-0.250px;font-style:normal;-webkit-text-stroke:0.12px #1a6fc0;transform:scaleX(0.9639);transform-origin:0 0;">Open order</div>
<svg class="b" style="left:1328.00px;top:876.50px;" width="82" height="20.5" viewBox="0 0 82 20.5"><path d="M0.7 10.2 L20.5 0.3 L19.6 7.6 L81 8.2 V12.4 L19.6 12.8 L20.5 20.2Z" fill="#e3151d"/></svg>
</body></html>
